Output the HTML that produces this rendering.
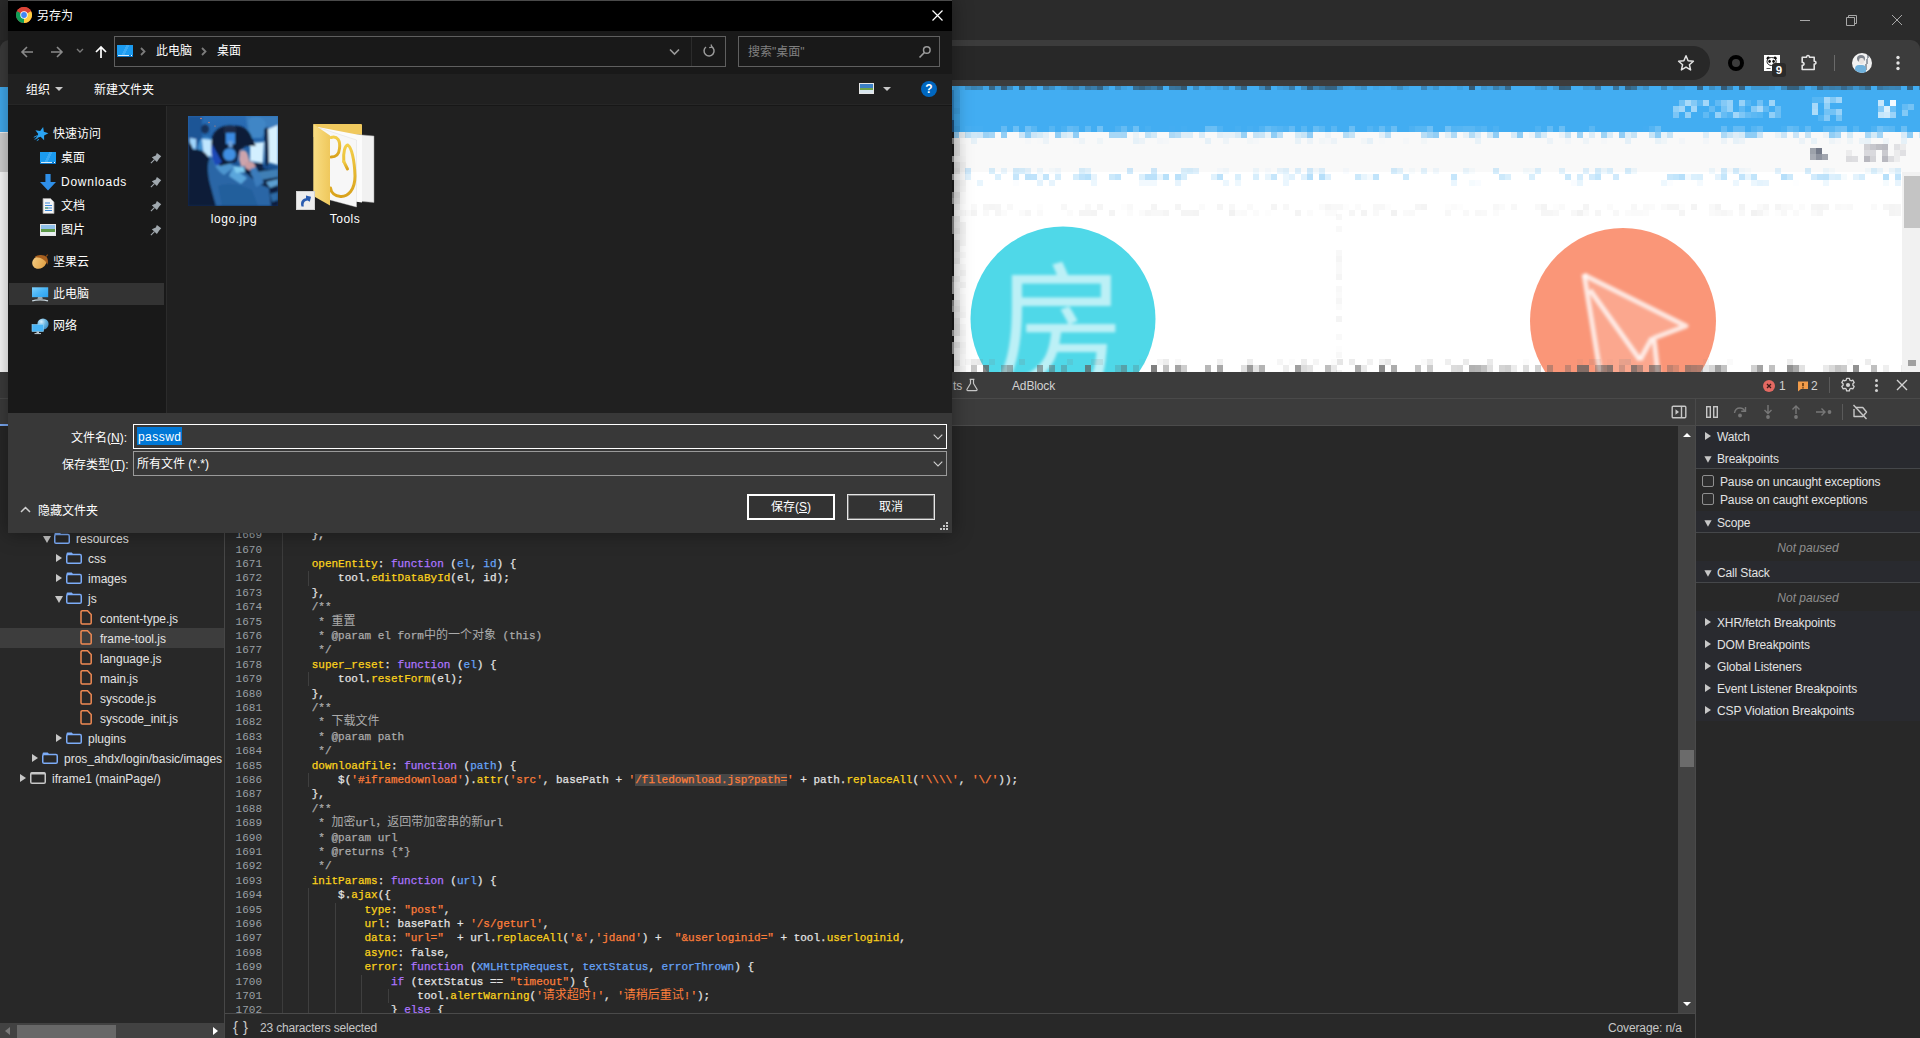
<!DOCTYPE html>
<html lang="zh-CN">
<head>
<meta charset="utf-8">
<title>另存为</title>
<style>
*{box-sizing:border-box;margin:0;padding:0}
html,body{width:1920px;height:1038px;overflow:hidden;background:#282828}
body{position:relative;font-family:"Liberation Sans","Noto Sans CJK SC",sans-serif;font-size:12px;color:#e3e3e3}
.abs,body>div,body>svg{position:absolute}
div,svg{position:absolute}
/* ---------- browser chrome ---------- */
#tabstrip{left:0;top:0;width:1920px;height:40px;background:#2b2b2b}
#btoolbar{left:0;top:40px;width:1920px;height:47px;background:#3c3c3c;border-radius:9px 9px 0 0}
#omni{left:200px;top:46px;width:1510px;height:34px;border-radius:17px;background:#282828}
/* ---------- page ---------- */
#page{left:0;top:86px;width:1920px;height:286px;background:#fff;overflow:hidden}
/* ---------- devtools ---------- */
#dtabs{left:0;top:372px;width:1920px;height:27px;background:#3c3c3c;border-bottom:1px solid #4a4a4a}
#dtool{left:0;top:399px;width:1920px;height:27px;background:#3c3c3c;border-bottom:1px solid #4b4b4b}
#navsel{left:0;top:424px;width:9px;height:2px;background:#7cacf8}
#tree{left:0;top:426px;width:224px;height:596px;background:#282828;overflow:hidden}
#treediv{left:224px;top:426px;width:1px;height:612px;background:#474747}
.tsel{left:0;width:224px;height:20px;background:#3d3d3d}
.tt{height:20px;line-height:20px;white-space:nowrap;color:#e3e3e3;font-size:12px}
.ti{position:absolute}
.arr-d{width:0;height:0;border-left:4.5px solid transparent;border-right:4.5px solid transparent;border-top:7px solid #c7c7c7}
.arr-r{width:0;height:0;border-top:4.5px solid transparent;border-bottom:4.5px solid transparent;border-left:6.5px solid #c7c7c7}
#hscroll{left:0;top:1023px;width:224px;height:15px;background:#424242}
#hthumb{left:17px;top:1025px;width:99px;height:13px;background:#686868}
#gutter{left:225px;top:426px;width:58px;height:587px;background:#282828}
#gutdiv{left:282px;top:426px;width:1px;height:587px;background:#3c3c3c}
#code{left:0;top:0;width:1679px;height:1013px;overflow:hidden;pointer-events:none}
.cl{left:285.3px;height:14.4px;line-height:14.4px;white-space:pre;font-family:"Liberation Mono","Noto Sans CJK SC",monospace;font-size:11px;color:#e3e3e3;-webkit-text-stroke:.25px}
.ln{left:225px;width:37px;text-align:right;height:14.4px;line-height:14.4px;font-family:"Liberation Mono",monospace;font-size:11px;color:#9aa0a6}
.ig{width:1px;background:#3f3f3f}
.ty{color:#fbd21c}.tk{color:#ad75ff}.td{color:#66a3f7}.ts{color:#fe7e3a}.tc{color:#ababab}
.th{color:#fe7e3a;background:#474747}
.cj{font-size:12px;-webkit-text-stroke:0}
#status{left:225px;top:1013px;width:1471px;height:25px;background:#282828;border-top:1px solid #4a4a4a}
#vscroll{left:1678px;top:426px;width:17px;height:587px;background:#424242}
#vthumb{left:1680px;top:750px;width:14px;height:17px;background:#6b6b6b}
#sidediv{left:1695px;top:399px;width:1px;height:639px;background:#4a4a4a}
#side{left:1696px;top:426px;width:224px;height:612px;background:#282828}
#sidetop{left:1696px;top:425px;width:224px;height:1px;background:#4b4b4b}
.sh{left:1696px;width:224px;height:22px;background:#292a2f}
.st{height:20px;line-height:20px;white-space:nowrap;color:#e3e3e3;font-size:12px;letter-spacing:-0.13px}
.arr-d.s{transform:scale(.9)}
.sline{left:1696px;width:224px;height:1px;background:#45474a}
.cb{width:12px;height:12px;border:1px solid #8f8f8f;border-radius:2px;background:#2d2d2d}
.np{left:1696px;width:224px;text-align:center;height:20px;line-height:20px;font-style:italic;color:#8f8f8f;font-size:12px}
/* ---------- dialog ---------- */
#dlg{left:8px;top:0;width:944px;height:533px;background:#202020;box-shadow:0 0 18px 1px rgba(0,0,0,.36);overflow:hidden}
#dlg div,#dlg svg{position:absolute}
#dtitle{left:0;top:1px;width:944px;height:30px;background:#000}
#dtop{left:0;top:0;width:944px;height:1px;background:#4a4a4a}
#dnav{left:0;top:31px;width:944px;height:43px;background:#191919}
#dtb{left:0;top:74px;width:944px;height:31px;background:#202020}
#dtbl{left:0;top:104px;width:944px;height:2px;background:linear-gradient(#262626 50%,#171717 50%)}
#dside{left:0;top:106px;width:158px;height:307px;background:#191919}
#dsidel{left:158px;top:106px;width:1px;height:307px;background:#2b2b2b}
#dbot{left:0;top:413px;width:944px;height:120px;background:#383838}
.dt{margin-top:1px;height:20px;line-height:20px;white-space:nowrap;color:#fff;font-size:12px}
.box{border:1px solid #5f5f5f}
</style>
</head>
<body>
<!-- ================= browser chrome ================= -->
<div id="tabstrip"></div>
<div id="btoolbar"></div>
<div id="omni"></div>
<!-- window controls -->
<svg style="left:1795px;top:10px" width="115" height="20" viewBox="0 0 115 20" fill="none" stroke="#a8a8a8" stroke-width="1">
<path d="M5 10.5h10"/>
<path d="M51.5 7.5h8v8h-8z M53.5 7.5v-2h8v8h-2"/>
<path d="M97 5l10 10M107 5l-10 10"/>
</svg>
<!-- star -->
<svg style="left:1677px;top:54px" width="18" height="18" viewBox="0 0 18 18"><path d="M9 1.8l2.1 5 5.3.4-4 3.5 1.2 5.2L9 13.1l-4.6 2.8 1.2-5.2-4-3.5 5.3-.4z" fill="none" stroke="#e3e3e3" stroke-width="1.5" stroke-linejoin="round"/></svg>
<!-- black ring ext -->
<div style="left:1728px;top:55px;width:16px;height:16px;border-radius:50%;border:4.5px solid #000"></div>
<!-- qr ext -->
<div style="left:1764px;top:55px;width:16px;height:16px;background:#fff"></div>
<svg style="left:1764px;top:55px" width="16" height="16" viewBox="0 0 16 16"><circle cx="4.300" cy="3.300" r="1.700" fill="#111"/><circle cx="11" cy="3.300" r="1.700" fill="#111"/><ellipse cx="7.600" cy="6.500" rx="4.600" ry="4" fill="#fff" stroke="#111" stroke-width=".9"/><ellipse cx="5.600" cy="6.300" rx="1.300" ry="1.600" fill="#111"/><ellipse cx="9.600" cy="6.300" rx="1.300" ry="1.600" fill="#111"/><path d="M2.500 13.500h4" stroke="#555" stroke-width="1"/></svg>
<div style="left:1772px;top:63px;width:14px;height:14px;border-radius:3px;background:#2b2b2b;color:#fff;font-weight:bold;font-size:11.500px;line-height:14px;text-align:center">9</div>
<!-- puzzle -->
<svg style="left:1799px;top:53px" width="20" height="20" viewBox="0 0 20 20"><path d="M3.200 4.300h4.300c-.3-2.400 3.300-2.400 3 0h4.700v3.900c2.300-.3 2.300 3.200 0 2.900v5.400H3.200v-4.100c2.400.3 2.400-3.300 0-3z" fill="none" stroke="#e3e3e3" stroke-width="1.600" stroke-linejoin="round"/></svg>
<div style="left:1834px;top:55px;width:1px;height:16px;background:#6a6a6a"></div>
<!-- avatar -->
<div style="left:1852px;top:53px;width:20px;height:20px;border-radius:50%;background:linear-gradient(100deg,#f2f2f2 0 66%,#9aa0a8 66% 74%,#f0f0f0 74%);overflow:hidden">
 <div style="left:5px;top:2px;width:8px;height:7px;border-radius:50%;background:#7d838c"></div>
 <div style="left:6.500px;top:5px;width:5px;height:6px;border-radius:40%;background:#e8e4e2"></div>
 <div style="left:3px;top:12px;width:11px;height:9px;border-radius:4px 4px 0 0;background:#6fb1dc"></div>
</div>
<!-- menu dots -->
<svg style="left:1895px;top:54px" width="6" height="18" viewBox="0 0 6 18"><circle cx="3" cy="3.500" r="1.700" fill="#e3e3e3"/><circle cx="3" cy="9" r="1.700" fill="#e3e3e3"/><circle cx="3" cy="14.500" r="1.700" fill="#e3e3e3"/></svg>

<!-- ================= page ================= -->
<div id="page">
<svg style="left:0;top:0" width="1920" height="286" viewBox="0 86 1920 286">
<defs><filter id="bl" x="-10%" y="-10%" width="120%" height="120%"><feGaussianBlur stdDeviation="1.6"/></filter></defs>
<circle cx="1063" cy="319" r="92.5" fill="#4fd8e8"/>
<text x="1060" y="373" text-anchor="middle" font-family="Noto Sans CJK SC,sans-serif" font-size="132" fill="#ffffff" fill-opacity="0.62" filter="url(#bl)">房</text>
<circle cx="1623" cy="321" r="93" fill="#fa9678"/>
<path d="M1584 275L1686 326L1654 338L1658 374L1600 374z" fill="#ffffff" fill-opacity="0.16" filter="url(#bl)"/>
<g fill="none" stroke="#ffffff" stroke-opacity="0.75" stroke-width="5" filter="url(#bl)" stroke-linejoin="round">
<path d="M1584 275L1686 326L1654 338L1658 374"/>
<path d="M1584 274L1600 372"/>
<path d="M1590 290L1640 360"/>
<path d="M1640 360L1652 338"/>
</g>
</svg>
<svg style="left:0;top:0" width="1920" height="286" viewBox="0 0 1920 286" shape-rendering="crispEdges">
<rect x="0" y="0" width="1920" height="46" fill="#42adf2"/>
<rect x="0" y="46" width="1920" height="40" fill="#f9f9f9"/>
<rect x="0" y="47" width="9" height="39" fill="#d4d4d4"/>
<rect x="953" y="0" width="6" height="4" fill="#2f3e4a" fill-opacity="0.11"/>
<rect x="959" y="0" width="6" height="4" fill="#2f3e4a" fill-opacity="0.05"/>
<rect x="965" y="0" width="6" height="4" fill="#2f3e4a" fill-opacity="0.27"/>
<rect x="971" y="0" width="6" height="4" fill="#2f3e4a" fill-opacity="0.38"/>
<rect x="977" y="0" width="6" height="4" fill="#2f3e4a" fill-opacity="0.33"/>
<rect x="983" y="0" width="6" height="4" fill="#2f3e4a" fill-opacity="0.07"/>
<rect x="989" y="0" width="6" height="4" fill="#2f3e4a" fill-opacity="0.62"/>
<rect x="995" y="0" width="6" height="4" fill="#2f3e4a" fill-opacity="0.17"/>
<rect x="1001" y="0" width="6" height="4" fill="#2f3e4a" fill-opacity="0.71"/>
<rect x="1007" y="0" width="6" height="4" fill="#2f3e4a" fill-opacity="0.30"/>
<rect x="1019" y="0" width="6" height="4" fill="#2f3e4a" fill-opacity="0.64"/>
<rect x="1025" y="0" width="6" height="4" fill="#2f3e4a" fill-opacity="0.11"/>
<rect x="1031" y="0" width="6" height="4" fill="#2f3e4a" fill-opacity="0.23"/>
<rect x="1043" y="0" width="6" height="4" fill="#2f3e4a" fill-opacity="0.44"/>
<rect x="1049" y="0" width="6" height="4" fill="#2f3e4a" fill-opacity="0.28"/>
<rect x="1055" y="0" width="6" height="4" fill="#2f3e4a" fill-opacity="0.05"/>
<rect x="1061" y="0" width="6" height="4" fill="#2f3e4a" fill-opacity="0.15"/>
<rect x="1067" y="0" width="6" height="4" fill="#2f3e4a" fill-opacity="0.32"/>
<rect x="1073" y="0" width="6" height="4" fill="#2f3e4a" fill-opacity="0.44"/>
<rect x="1079" y="0" width="6" height="4" fill="#2f3e4a" fill-opacity="0.22"/>
<rect x="1085" y="0" width="6" height="4" fill="#2f3e4a" fill-opacity="0.52"/>
<rect x="1091" y="0" width="6" height="4" fill="#2f3e4a" fill-opacity="0.43"/>
<rect x="1097" y="0" width="6" height="4" fill="#2f3e4a" fill-opacity="0.66"/>
<rect x="1103" y="0" width="6" height="4" fill="#2f3e4a" fill-opacity="0.22"/>
<rect x="1115" y="0" width="6" height="4" fill="#2f3e4a" fill-opacity="0.31"/>
<rect x="1121" y="0" width="6" height="4" fill="#2f3e4a" fill-opacity="0.11"/>
<rect x="1127" y="0" width="6" height="4" fill="#2f3e4a" fill-opacity="0.03"/>
<rect x="1133" y="0" width="6" height="4" fill="#2f3e4a" fill-opacity="0.57"/>
<rect x="1139" y="0" width="6" height="4" fill="#2f3e4a" fill-opacity="0.66"/>
<rect x="1145" y="0" width="6" height="4" fill="#2f3e4a" fill-opacity="0.52"/>
<rect x="1151" y="0" width="6" height="4" fill="#2f3e4a" fill-opacity="0.43"/>
<rect x="1157" y="0" width="6" height="4" fill="#2f3e4a" fill-opacity="0.63"/>
<rect x="1169" y="0" width="6" height="4" fill="#2f3e4a" fill-opacity="0.50"/>
<rect x="1175" y="0" width="6" height="4" fill="#2f3e4a" fill-opacity="0.53"/>
<rect x="1181" y="0" width="6" height="4" fill="#2f3e4a" fill-opacity="0.74"/>
<rect x="1193" y="0" width="6" height="4" fill="#2f3e4a" fill-opacity="0.29"/>
<rect x="1199" y="0" width="6" height="4" fill="#2f3e4a" fill-opacity="0.02"/>
<rect x="1205" y="0" width="6" height="4" fill="#2f3e4a" fill-opacity="0.13"/>
<rect x="1211" y="0" width="6" height="4" fill="#2f3e4a" fill-opacity="0.04"/>
<rect x="1217" y="0" width="6" height="4" fill="#2f3e4a" fill-opacity="0.10"/>
<rect x="1223" y="0" width="6" height="4" fill="#2f3e4a" fill-opacity="0.29"/>
<rect x="1235" y="0" width="6" height="4" fill="#2f3e4a" fill-opacity="0.34"/>
<rect x="1241" y="0" width="6" height="4" fill="#2f3e4a" fill-opacity="0.66"/>
<rect x="1259" y="0" width="6" height="4" fill="#2f3e4a" fill-opacity="0.31"/>
<rect x="1265" y="0" width="6" height="4" fill="#2f3e4a" fill-opacity="0.66"/>
<rect x="1277" y="0" width="6" height="4" fill="#2f3e4a" fill-opacity="0.13"/>
<rect x="1283" y="0" width="6" height="4" fill="#2f3e4a" fill-opacity="0.18"/>
<rect x="1289" y="0" width="6" height="4" fill="#2f3e4a" fill-opacity="0.44"/>
<rect x="1295" y="0" width="6" height="4" fill="#2f3e4a" fill-opacity="0.00"/>
<rect x="1301" y="0" width="6" height="4" fill="#2f3e4a" fill-opacity="0.28"/>
<rect x="1307" y="0" width="6" height="4" fill="#2f3e4a" fill-opacity="0.71"/>
<rect x="1313" y="0" width="6" height="4" fill="#2f3e4a" fill-opacity="0.39"/>
<rect x="1319" y="0" width="6" height="4" fill="#2f3e4a" fill-opacity="0.51"/>
<rect x="1325" y="0" width="6" height="4" fill="#2f3e4a" fill-opacity="0.67"/>
<rect x="1331" y="0" width="6" height="4" fill="#2f3e4a" fill-opacity="0.66"/>
<rect x="1337" y="0" width="6" height="4" fill="#2f3e4a" fill-opacity="0.29"/>
<rect x="1343" y="0" width="6" height="4" fill="#2f3e4a" fill-opacity="0.08"/>
<rect x="1349" y="0" width="6" height="4" fill="#2f3e4a" fill-opacity="0.05"/>
<rect x="1355" y="0" width="6" height="4" fill="#2f3e4a" fill-opacity="0.16"/>
<rect x="1361" y="0" width="6" height="4" fill="#2f3e4a" fill-opacity="0.26"/>
<rect x="1367" y="0" width="6" height="4" fill="#2f3e4a" fill-opacity="0.00"/>
<rect x="1373" y="0" width="6" height="4" fill="#2f3e4a" fill-opacity="0.08"/>
<rect x="1379" y="0" width="6" height="4" fill="#2f3e4a" fill-opacity="0.02"/>
<rect x="1391" y="0" width="6" height="4" fill="#2f3e4a" fill-opacity="0.11"/>
<rect x="1397" y="0" width="6" height="4" fill="#2f3e4a" fill-opacity="0.26"/>
<rect x="1403" y="0" width="6" height="4" fill="#2f3e4a" fill-opacity="0.09"/>
<rect x="1421" y="0" width="6" height="4" fill="#2f3e4a" fill-opacity="0.36"/>
<rect x="1427" y="0" width="6" height="4" fill="#2f3e4a" fill-opacity="0.08"/>
<rect x="1433" y="0" width="6" height="4" fill="#2f3e4a" fill-opacity="0.20"/>
<rect x="1445" y="0" width="6" height="4" fill="#2f3e4a" fill-opacity="0.02"/>
<rect x="1457" y="0" width="6" height="4" fill="#2f3e4a" fill-opacity="0.11"/>
<rect x="1463" y="0" width="6" height="4" fill="#2f3e4a" fill-opacity="0.02"/>
<rect x="1469" y="0" width="6" height="4" fill="#2f3e4a" fill-opacity="0.73"/>
<rect x="1481" y="0" width="6" height="4" fill="#2f3e4a" fill-opacity="0.20"/>
<rect x="1487" y="0" width="6" height="4" fill="#2f3e4a" fill-opacity="0.13"/>
<rect x="1493" y="0" width="6" height="4" fill="#2f3e4a" fill-opacity="0.40"/>
<rect x="1499" y="0" width="6" height="4" fill="#2f3e4a" fill-opacity="0.25"/>
<rect x="1505" y="0" width="6" height="4" fill="#2f3e4a" fill-opacity="0.61"/>
<rect x="1535" y="0" width="6" height="4" fill="#2f3e4a" fill-opacity="0.17"/>
<rect x="1541" y="0" width="6" height="4" fill="#2f3e4a" fill-opacity="0.27"/>
<rect x="1547" y="0" width="6" height="4" fill="#2f3e4a" fill-opacity="0.02"/>
<rect x="1553" y="0" width="6" height="4" fill="#2f3e4a" fill-opacity="0.19"/>
<rect x="1559" y="0" width="6" height="4" fill="#2f3e4a" fill-opacity="0.72"/>
<rect x="1565" y="0" width="6" height="4" fill="#2f3e4a" fill-opacity="0.70"/>
<rect x="1583" y="0" width="6" height="4" fill="#2f3e4a" fill-opacity="0.17"/>
<rect x="1589" y="0" width="6" height="4" fill="#2f3e4a" fill-opacity="0.15"/>
<rect x="1595" y="0" width="6" height="4" fill="#2f3e4a" fill-opacity="0.47"/>
<rect x="1613" y="0" width="6" height="4" fill="#2f3e4a" fill-opacity="0.49"/>
<rect x="1619" y="0" width="6" height="4" fill="#2f3e4a" fill-opacity="0.06"/>
<rect x="1625" y="0" width="6" height="4" fill="#2f3e4a" fill-opacity="0.68"/>
<rect x="1631" y="0" width="6" height="4" fill="#2f3e4a" fill-opacity="0.56"/>
<rect x="1637" y="0" width="6" height="4" fill="#2f3e4a" fill-opacity="0.13"/>
<rect x="1643" y="0" width="6" height="4" fill="#2f3e4a" fill-opacity="0.25"/>
<rect x="1661" y="0" width="6" height="4" fill="#2f3e4a" fill-opacity="0.30"/>
<rect x="1673" y="0" width="6" height="4" fill="#2f3e4a" fill-opacity="0.13"/>
<rect x="1679" y="0" width="6" height="4" fill="#2f3e4a" fill-opacity="0.11"/>
<rect x="1697" y="0" width="6" height="4" fill="#2f3e4a" fill-opacity="0.62"/>
<rect x="1709" y="0" width="6" height="4" fill="#2f3e4a" fill-opacity="0.26"/>
<rect x="1715" y="0" width="6" height="4" fill="#2f3e4a" fill-opacity="0.10"/>
<rect x="1721" y="0" width="6" height="4" fill="#2f3e4a" fill-opacity="0.73"/>
<rect x="1727" y="0" width="6" height="4" fill="#2f3e4a" fill-opacity="0.39"/>
<rect x="1739" y="0" width="6" height="4" fill="#2f3e4a" fill-opacity="0.65"/>
<rect x="1751" y="0" width="6" height="4" fill="#2f3e4a" fill-opacity="0.19"/>
<rect x="1757" y="0" width="6" height="4" fill="#2f3e4a" fill-opacity="0.18"/>
<rect x="1763" y="0" width="6" height="4" fill="#2f3e4a" fill-opacity="0.19"/>
<rect x="1769" y="0" width="6" height="4" fill="#2f3e4a" fill-opacity="0.10"/>
<rect x="1781" y="0" width="6" height="4" fill="#2f3e4a" fill-opacity="0.34"/>
<rect x="1787" y="0" width="6" height="4" fill="#2f3e4a" fill-opacity="0.68"/>
<rect x="1793" y="0" width="6" height="4" fill="#2f3e4a" fill-opacity="0.69"/>
<rect x="1799" y="0" width="6" height="4" fill="#2f3e4a" fill-opacity="0.40"/>
<rect x="1805" y="0" width="6" height="4" fill="#2f3e4a" fill-opacity="0.01"/>
<rect x="1811" y="0" width="6" height="4" fill="#2f3e4a" fill-opacity="0.14"/>
<rect x="1817" y="0" width="6" height="4" fill="#2f3e4a" fill-opacity="0.60"/>
<rect x="1823" y="0" width="6" height="4" fill="#2f3e4a" fill-opacity="0.36"/>
<rect x="1829" y="0" width="6" height="4" fill="#2f3e4a" fill-opacity="0.42"/>
<rect x="1835" y="0" width="6" height="4" fill="#2f3e4a" fill-opacity="0.39"/>
<rect x="1841" y="0" width="6" height="4" fill="#2f3e4a" fill-opacity="0.59"/>
<rect x="1847" y="0" width="6" height="4" fill="#2f3e4a" fill-opacity="0.42"/>
<rect x="1853" y="0" width="6" height="4" fill="#2f3e4a" fill-opacity="0.21"/>
<rect x="1859" y="0" width="6" height="4" fill="#2f3e4a" fill-opacity="0.38"/>
<rect x="1865" y="0" width="6" height="4" fill="#2f3e4a" fill-opacity="0.57"/>
<rect x="1877" y="0" width="6" height="4" fill="#2f3e4a" fill-opacity="0.46"/>
<rect x="1883" y="0" width="6" height="4" fill="#2f3e4a" fill-opacity="0.38"/>
<rect x="1889" y="0" width="6" height="4" fill="#2f3e4a" fill-opacity="0.34"/>
<rect x="1895" y="0" width="6" height="4" fill="#2f3e4a" fill-opacity="0.36"/>
<rect x="1907" y="0" width="6" height="4" fill="#2f3e4a" fill-opacity="0.66"/>
<rect x="1919" y="0" width="6" height="4" fill="#2f3e4a" fill-opacity="0.42"/>
<rect x="965" y="40" width="6" height="6" fill="#ffffff" fill-opacity="0.03"/>
<rect x="971" y="40" width="6" height="6" fill="#ffffff" fill-opacity="0.02"/>
<rect x="977" y="40" width="6" height="6" fill="#ffffff" fill-opacity="0.02"/>
<rect x="1001" y="40" width="6" height="6" fill="#ffffff" fill-opacity="0.18"/>
<rect x="1013" y="40" width="6" height="6" fill="#ffffff" fill-opacity="0.22"/>
<rect x="1025" y="40" width="6" height="6" fill="#ffffff" fill-opacity="0.24"/>
<rect x="1031" y="40" width="6" height="6" fill="#ffffff" fill-opacity="0.12"/>
<rect x="1049" y="40" width="6" height="6" fill="#ffffff" fill-opacity="0.11"/>
<rect x="1061" y="40" width="6" height="6" fill="#ffffff" fill-opacity="0.05"/>
<rect x="1067" y="40" width="6" height="6" fill="#ffffff" fill-opacity="0.18"/>
<rect x="1073" y="40" width="6" height="6" fill="#ffffff" fill-opacity="0.14"/>
<rect x="1079" y="40" width="6" height="6" fill="#ffffff" fill-opacity="0.00"/>
<rect x="1085" y="40" width="6" height="6" fill="#ffffff" fill-opacity="0.16"/>
<rect x="1097" y="40" width="6" height="6" fill="#ffffff" fill-opacity="0.25"/>
<rect x="1115" y="40" width="6" height="6" fill="#ffffff" fill-opacity="0.07"/>
<rect x="1121" y="40" width="6" height="6" fill="#ffffff" fill-opacity="0.19"/>
<rect x="1127" y="40" width="6" height="6" fill="#ffffff" fill-opacity="0.03"/>
<rect x="1133" y="40" width="6" height="6" fill="#ffffff" fill-opacity="0.23"/>
<rect x="1145" y="40" width="6" height="6" fill="#ffffff" fill-opacity="0.04"/>
<rect x="1169" y="40" width="6" height="6" fill="#ffffff" fill-opacity="0.01"/>
<rect x="1181" y="40" width="6" height="6" fill="#ffffff" fill-opacity="0.02"/>
<rect x="1205" y="40" width="6" height="6" fill="#ffffff" fill-opacity="0.21"/>
<rect x="1211" y="40" width="6" height="6" fill="#ffffff" fill-opacity="0.22"/>
<rect x="1217" y="40" width="6" height="6" fill="#ffffff" fill-opacity="0.08"/>
<rect x="1235" y="40" width="6" height="6" fill="#ffffff" fill-opacity="0.03"/>
<rect x="1247" y="40" width="6" height="6" fill="#ffffff" fill-opacity="0.03"/>
<rect x="1253" y="40" width="6" height="6" fill="#ffffff" fill-opacity="0.01"/>
<rect x="1259" y="40" width="6" height="6" fill="#ffffff" fill-opacity="0.08"/>
<rect x="1265" y="40" width="6" height="6" fill="#ffffff" fill-opacity="0.19"/>
<rect x="1271" y="40" width="6" height="6" fill="#ffffff" fill-opacity="0.13"/>
<rect x="1277" y="40" width="6" height="6" fill="#ffffff" fill-opacity="0.09"/>
<rect x="1283" y="40" width="6" height="6" fill="#ffffff" fill-opacity="0.06"/>
<rect x="1289" y="40" width="6" height="6" fill="#ffffff" fill-opacity="0.18"/>
<rect x="1301" y="40" width="6" height="6" fill="#ffffff" fill-opacity="0.12"/>
<rect x="1313" y="40" width="6" height="6" fill="#ffffff" fill-opacity="0.20"/>
<rect x="1319" y="40" width="6" height="6" fill="#ffffff" fill-opacity="0.12"/>
<rect x="1331" y="40" width="6" height="6" fill="#ffffff" fill-opacity="0.13"/>
<rect x="1349" y="40" width="6" height="6" fill="#ffffff" fill-opacity="0.21"/>
<rect x="1367" y="40" width="6" height="6" fill="#ffffff" fill-opacity="0.09"/>
<rect x="1373" y="40" width="6" height="6" fill="#ffffff" fill-opacity="0.03"/>
<rect x="1379" y="40" width="6" height="6" fill="#ffffff" fill-opacity="0.19"/>
<rect x="1385" y="40" width="6" height="6" fill="#ffffff" fill-opacity="0.04"/>
<rect x="1391" y="40" width="6" height="6" fill="#ffffff" fill-opacity="0.21"/>
<rect x="1409" y="40" width="6" height="6" fill="#ffffff" fill-opacity="0.06"/>
<rect x="1415" y="40" width="6" height="6" fill="#ffffff" fill-opacity="0.11"/>
<rect x="1421" y="40" width="6" height="6" fill="#ffffff" fill-opacity="0.11"/>
<rect x="1427" y="40" width="6" height="6" fill="#ffffff" fill-opacity="0.24"/>
<rect x="1445" y="40" width="6" height="6" fill="#ffffff" fill-opacity="0.24"/>
<rect x="1451" y="40" width="6" height="6" fill="#ffffff" fill-opacity="0.09"/>
<rect x="1457" y="40" width="6" height="6" fill="#ffffff" fill-opacity="0.10"/>
<rect x="1463" y="40" width="6" height="6" fill="#ffffff" fill-opacity="0.13"/>
<rect x="1469" y="40" width="6" height="6" fill="#ffffff" fill-opacity="0.13"/>
<rect x="1475" y="40" width="6" height="6" fill="#ffffff" fill-opacity="0.07"/>
<rect x="1481" y="40" width="6" height="6" fill="#ffffff" fill-opacity="0.10"/>
<rect x="1487" y="40" width="6" height="6" fill="#ffffff" fill-opacity="0.01"/>
<rect x="1493" y="40" width="6" height="6" fill="#ffffff" fill-opacity="0.06"/>
<rect x="1535" y="40" width="6" height="6" fill="#ffffff" fill-opacity="0.08"/>
<rect x="1547" y="40" width="6" height="6" fill="#ffffff" fill-opacity="0.18"/>
<rect x="1559" y="40" width="6" height="6" fill="#ffffff" fill-opacity="0.21"/>
<rect x="1589" y="40" width="6" height="6" fill="#ffffff" fill-opacity="0.13"/>
<rect x="1643" y="40" width="6" height="6" fill="#ffffff" fill-opacity="0.01"/>
<rect x="1649" y="40" width="6" height="6" fill="#ffffff" fill-opacity="0.09"/>
<rect x="1655" y="40" width="6" height="6" fill="#ffffff" fill-opacity="0.21"/>
<rect x="1685" y="40" width="6" height="6" fill="#ffffff" fill-opacity="0.00"/>
<rect x="1721" y="40" width="6" height="6" fill="#ffffff" fill-opacity="0.18"/>
<rect x="1727" y="40" width="6" height="6" fill="#ffffff" fill-opacity="0.02"/>
<rect x="1733" y="40" width="6" height="6" fill="#ffffff" fill-opacity="0.18"/>
<rect x="1739" y="40" width="6" height="6" fill="#ffffff" fill-opacity="0.18"/>
<rect x="1751" y="40" width="6" height="6" fill="#ffffff" fill-opacity="0.10"/>
<rect x="1757" y="40" width="6" height="6" fill="#ffffff" fill-opacity="0.17"/>
<rect x="1781" y="40" width="6" height="6" fill="#ffffff" fill-opacity="0.04"/>
<rect x="1787" y="40" width="6" height="6" fill="#ffffff" fill-opacity="0.19"/>
<rect x="1793" y="40" width="6" height="6" fill="#ffffff" fill-opacity="0.14"/>
<rect x="1799" y="40" width="6" height="6" fill="#ffffff" fill-opacity="0.02"/>
<rect x="1805" y="40" width="6" height="6" fill="#ffffff" fill-opacity="0.17"/>
<rect x="1823" y="40" width="6" height="6" fill="#ffffff" fill-opacity="0.13"/>
<rect x="1829" y="40" width="6" height="6" fill="#ffffff" fill-opacity="0.12"/>
<rect x="1835" y="40" width="6" height="6" fill="#ffffff" fill-opacity="0.22"/>
<rect x="1841" y="40" width="6" height="6" fill="#ffffff" fill-opacity="0.24"/>
<rect x="1853" y="40" width="6" height="6" fill="#ffffff" fill-opacity="0.11"/>
<rect x="1871" y="40" width="6" height="6" fill="#ffffff" fill-opacity="0.07"/>
<rect x="1877" y="40" width="6" height="6" fill="#ffffff" fill-opacity="0.24"/>
<rect x="1883" y="40" width="6" height="6" fill="#ffffff" fill-opacity="0.15"/>
<rect x="1889" y="40" width="6" height="6" fill="#ffffff" fill-opacity="0.13"/>
<rect x="1901" y="40" width="6" height="6" fill="#ffffff" fill-opacity="0.21"/>
<rect x="953" y="46" width="6" height="6" fill="#42adf2" fill-opacity="0.54"/>
<rect x="959" y="46" width="6" height="6" fill="#42adf2" fill-opacity="0.06"/>
<rect x="965" y="46" width="6" height="6" fill="#42adf2" fill-opacity="0.32"/>
<rect x="971" y="46" width="6" height="6" fill="#42adf2" fill-opacity="0.22"/>
<rect x="977" y="46" width="6" height="6" fill="#42adf2" fill-opacity="0.24"/>
<rect x="983" y="46" width="6" height="6" fill="#42adf2" fill-opacity="0.51"/>
<rect x="989" y="46" width="6" height="6" fill="#42adf2" fill-opacity="0.46"/>
<rect x="1001" y="46" width="6" height="6" fill="#42adf2" fill-opacity="0.56"/>
<rect x="1019" y="46" width="6" height="6" fill="#42adf2" fill-opacity="0.25"/>
<rect x="1025" y="46" width="6" height="6" fill="#42adf2" fill-opacity="0.60"/>
<rect x="1031" y="46" width="6" height="6" fill="#42adf2" fill-opacity="0.25"/>
<rect x="1037" y="46" width="6" height="6" fill="#42adf2" fill-opacity="0.20"/>
<rect x="1043" y="46" width="6" height="6" fill="#42adf2" fill-opacity="0.11"/>
<rect x="1055" y="46" width="6" height="6" fill="#42adf2" fill-opacity="0.56"/>
<rect x="1061" y="46" width="6" height="6" fill="#42adf2" fill-opacity="0.20"/>
<rect x="1067" y="46" width="6" height="6" fill="#42adf2" fill-opacity="0.15"/>
<rect x="1073" y="46" width="6" height="6" fill="#42adf2" fill-opacity="0.58"/>
<rect x="1109" y="46" width="6" height="6" fill="#42adf2" fill-opacity="0.45"/>
<rect x="1115" y="46" width="6" height="6" fill="#42adf2" fill-opacity="0.45"/>
<rect x="1121" y="46" width="6" height="6" fill="#42adf2" fill-opacity="0.46"/>
<rect x="1133" y="46" width="6" height="6" fill="#42adf2" fill-opacity="0.08"/>
<rect x="1145" y="46" width="6" height="6" fill="#42adf2" fill-opacity="0.31"/>
<rect x="1151" y="46" width="6" height="6" fill="#42adf2" fill-opacity="0.21"/>
<rect x="1169" y="46" width="6" height="6" fill="#42adf2" fill-opacity="0.41"/>
<rect x="1175" y="46" width="6" height="6" fill="#42adf2" fill-opacity="0.36"/>
<rect x="1181" y="46" width="6" height="6" fill="#42adf2" fill-opacity="0.14"/>
<rect x="1187" y="46" width="6" height="6" fill="#42adf2" fill-opacity="0.16"/>
<rect x="1199" y="46" width="6" height="6" fill="#42adf2" fill-opacity="0.17"/>
<rect x="1217" y="46" width="6" height="6" fill="#42adf2" fill-opacity="0.13"/>
<rect x="1223" y="46" width="6" height="6" fill="#42adf2" fill-opacity="0.10"/>
<rect x="1229" y="46" width="6" height="6" fill="#42adf2" fill-opacity="0.10"/>
<rect x="1235" y="46" width="6" height="6" fill="#42adf2" fill-opacity="0.19"/>
<rect x="1241" y="46" width="6" height="6" fill="#42adf2" fill-opacity="0.54"/>
<rect x="1253" y="46" width="6" height="6" fill="#42adf2" fill-opacity="0.28"/>
<rect x="1259" y="46" width="6" height="6" fill="#42adf2" fill-opacity="0.26"/>
<rect x="1265" y="46" width="6" height="6" fill="#42adf2" fill-opacity="0.08"/>
<rect x="1271" y="46" width="6" height="6" fill="#42adf2" fill-opacity="0.58"/>
<rect x="1277" y="46" width="6" height="6" fill="#42adf2" fill-opacity="0.33"/>
<rect x="1295" y="46" width="6" height="6" fill="#42adf2" fill-opacity="0.20"/>
<rect x="1301" y="46" width="6" height="6" fill="#42adf2" fill-opacity="0.27"/>
<rect x="1307" y="46" width="6" height="6" fill="#42adf2" fill-opacity="0.57"/>
<rect x="1325" y="46" width="6" height="6" fill="#42adf2" fill-opacity="0.07"/>
<rect x="1343" y="46" width="6" height="6" fill="#42adf2" fill-opacity="0.37"/>
<rect x="1349" y="46" width="6" height="6" fill="#42adf2" fill-opacity="0.27"/>
<rect x="1379" y="46" width="6" height="6" fill="#42adf2" fill-opacity="0.11"/>
<rect x="1385" y="46" width="6" height="6" fill="#42adf2" fill-opacity="0.34"/>
<rect x="1421" y="46" width="6" height="6" fill="#42adf2" fill-opacity="0.35"/>
<rect x="1427" y="46" width="6" height="6" fill="#42adf2" fill-opacity="0.48"/>
<rect x="1433" y="46" width="6" height="6" fill="#42adf2" fill-opacity="0.56"/>
<rect x="1445" y="46" width="6" height="6" fill="#42adf2" fill-opacity="0.12"/>
<rect x="1451" y="46" width="6" height="6" fill="#42adf2" fill-opacity="0.40"/>
<rect x="1463" y="46" width="6" height="6" fill="#42adf2" fill-opacity="0.09"/>
<rect x="1469" y="46" width="6" height="6" fill="#42adf2" fill-opacity="0.37"/>
<rect x="1475" y="46" width="6" height="6" fill="#42adf2" fill-opacity="0.17"/>
<rect x="1487" y="46" width="6" height="6" fill="#42adf2" fill-opacity="0.22"/>
<rect x="1493" y="46" width="6" height="6" fill="#42adf2" fill-opacity="0.58"/>
<rect x="1511" y="46" width="6" height="6" fill="#42adf2" fill-opacity="0.18"/>
<rect x="1517" y="46" width="6" height="6" fill="#42adf2" fill-opacity="0.58"/>
<rect x="1529" y="46" width="6" height="6" fill="#42adf2" fill-opacity="0.06"/>
<rect x="1535" y="46" width="6" height="6" fill="#42adf2" fill-opacity="0.42"/>
<rect x="1541" y="46" width="6" height="6" fill="#42adf2" fill-opacity="0.19"/>
<rect x="1559" y="46" width="6" height="6" fill="#42adf2" fill-opacity="0.07"/>
<rect x="1565" y="46" width="6" height="6" fill="#42adf2" fill-opacity="0.28"/>
<rect x="1577" y="46" width="6" height="6" fill="#42adf2" fill-opacity="0.49"/>
<rect x="1589" y="46" width="6" height="6" fill="#42adf2" fill-opacity="0.16"/>
<rect x="1601" y="46" width="6" height="6" fill="#42adf2" fill-opacity="0.50"/>
<rect x="1607" y="46" width="6" height="6" fill="#42adf2" fill-opacity="0.17"/>
<rect x="1619" y="46" width="6" height="6" fill="#42adf2" fill-opacity="0.57"/>
<rect x="1625" y="46" width="6" height="6" fill="#42adf2" fill-opacity="0.15"/>
<rect x="1631" y="46" width="6" height="6" fill="#42adf2" fill-opacity="0.28"/>
<rect x="1649" y="46" width="6" height="6" fill="#42adf2" fill-opacity="0.27"/>
<rect x="1655" y="46" width="6" height="6" fill="#42adf2" fill-opacity="0.59"/>
<rect x="1661" y="46" width="6" height="6" fill="#42adf2" fill-opacity="0.08"/>
<rect x="1667" y="46" width="6" height="6" fill="#42adf2" fill-opacity="0.27"/>
<rect x="1703" y="46" width="6" height="6" fill="#42adf2" fill-opacity="0.15"/>
<rect x="1721" y="46" width="6" height="6" fill="#42adf2" fill-opacity="0.42"/>
<rect x="1727" y="46" width="6" height="6" fill="#42adf2" fill-opacity="0.26"/>
<rect x="1733" y="46" width="6" height="6" fill="#42adf2" fill-opacity="0.14"/>
<rect x="1739" y="46" width="6" height="6" fill="#42adf2" fill-opacity="0.20"/>
<rect x="1745" y="46" width="6" height="6" fill="#42adf2" fill-opacity="0.58"/>
<rect x="1751" y="46" width="6" height="6" fill="#42adf2" fill-opacity="0.58"/>
<rect x="1757" y="46" width="6" height="6" fill="#42adf2" fill-opacity="0.25"/>
<rect x="1775" y="46" width="6" height="6" fill="#42adf2" fill-opacity="0.08"/>
<rect x="1781" y="46" width="6" height="6" fill="#42adf2" fill-opacity="0.25"/>
<rect x="1793" y="46" width="6" height="6" fill="#42adf2" fill-opacity="0.25"/>
<rect x="1805" y="46" width="6" height="6" fill="#42adf2" fill-opacity="0.28"/>
<rect x="1823" y="46" width="6" height="6" fill="#42adf2" fill-opacity="0.07"/>
<rect x="1829" y="46" width="6" height="6" fill="#42adf2" fill-opacity="0.56"/>
<rect x="1835" y="46" width="6" height="6" fill="#42adf2" fill-opacity="0.46"/>
<rect x="1847" y="46" width="6" height="6" fill="#42adf2" fill-opacity="0.20"/>
<rect x="1865" y="46" width="6" height="6" fill="#42adf2" fill-opacity="0.44"/>
<rect x="1871" y="46" width="6" height="6" fill="#42adf2" fill-opacity="0.20"/>
<rect x="1877" y="46" width="6" height="6" fill="#42adf2" fill-opacity="0.47"/>
<rect x="1901" y="46" width="6" height="6" fill="#42adf2" fill-opacity="0.18"/>
<rect x="1907" y="46" width="6" height="6" fill="#42adf2" fill-opacity="0.58"/>
<rect x="1919" y="46" width="6" height="6" fill="#42adf2" fill-opacity="0.19"/>
<rect x="971" y="52" width="6" height="6" fill="#42adf2" fill-opacity="0.10"/>
<rect x="1025" y="52" width="6" height="6" fill="#42adf2" fill-opacity="0.02"/>
<rect x="1037" y="52" width="6" height="6" fill="#42adf2" fill-opacity="0.01"/>
<rect x="1043" y="52" width="6" height="6" fill="#42adf2" fill-opacity="0.07"/>
<rect x="1073" y="52" width="6" height="6" fill="#42adf2" fill-opacity="0.01"/>
<rect x="1079" y="52" width="6" height="6" fill="#42adf2" fill-opacity="0.06"/>
<rect x="1097" y="52" width="6" height="6" fill="#42adf2" fill-opacity="0.05"/>
<rect x="1133" y="52" width="6" height="6" fill="#42adf2" fill-opacity="0.10"/>
<rect x="1139" y="52" width="6" height="6" fill="#42adf2" fill-opacity="0.07"/>
<rect x="1157" y="52" width="6" height="6" fill="#42adf2" fill-opacity="0.03"/>
<rect x="1163" y="52" width="6" height="6" fill="#42adf2" fill-opacity="0.02"/>
<rect x="1205" y="52" width="6" height="6" fill="#42adf2" fill-opacity="0.10"/>
<rect x="1223" y="52" width="6" height="6" fill="#42adf2" fill-opacity="0.06"/>
<rect x="1247" y="52" width="6" height="6" fill="#42adf2" fill-opacity="0.04"/>
<rect x="1253" y="52" width="6" height="6" fill="#42adf2" fill-opacity="0.02"/>
<rect x="1295" y="52" width="6" height="6" fill="#42adf2" fill-opacity="0.09"/>
<rect x="1307" y="52" width="6" height="6" fill="#42adf2" fill-opacity="0.07"/>
<rect x="1319" y="52" width="6" height="6" fill="#42adf2" fill-opacity="0.04"/>
<rect x="1325" y="52" width="6" height="6" fill="#42adf2" fill-opacity="0.02"/>
<rect x="1331" y="52" width="6" height="6" fill="#42adf2" fill-opacity="0.07"/>
<rect x="1343" y="52" width="6" height="6" fill="#42adf2" fill-opacity="0.00"/>
<rect x="1361" y="52" width="6" height="6" fill="#42adf2" fill-opacity="0.04"/>
<rect x="1367" y="52" width="6" height="6" fill="#42adf2" fill-opacity="0.10"/>
<rect x="1379" y="52" width="6" height="6" fill="#42adf2" fill-opacity="0.01"/>
<rect x="1403" y="52" width="6" height="6" fill="#42adf2" fill-opacity="0.02"/>
<rect x="1421" y="52" width="6" height="6" fill="#42adf2" fill-opacity="0.04"/>
<rect x="1475" y="52" width="6" height="6" fill="#42adf2" fill-opacity="0.09"/>
<rect x="1481" y="52" width="6" height="6" fill="#42adf2" fill-opacity="0.00"/>
<rect x="1523" y="52" width="6" height="6" fill="#42adf2" fill-opacity="0.00"/>
<rect x="1547" y="52" width="6" height="6" fill="#42adf2" fill-opacity="0.07"/>
<rect x="1565" y="52" width="6" height="6" fill="#42adf2" fill-opacity="0.03"/>
<rect x="1583" y="52" width="6" height="6" fill="#42adf2" fill-opacity="0.06"/>
<rect x="1601" y="52" width="6" height="6" fill="#42adf2" fill-opacity="0.02"/>
<rect x="1625" y="52" width="6" height="6" fill="#42adf2" fill-opacity="0.11"/>
<rect x="1655" y="52" width="6" height="6" fill="#42adf2" fill-opacity="0.09"/>
<rect x="1661" y="52" width="6" height="6" fill="#42adf2" fill-opacity="0.05"/>
<rect x="1679" y="52" width="6" height="6" fill="#42adf2" fill-opacity="0.03"/>
<rect x="1703" y="52" width="6" height="6" fill="#42adf2" fill-opacity="0.03"/>
<rect x="1721" y="52" width="6" height="6" fill="#42adf2" fill-opacity="0.07"/>
<rect x="1733" y="52" width="6" height="6" fill="#42adf2" fill-opacity="0.10"/>
<rect x="1739" y="52" width="6" height="6" fill="#42adf2" fill-opacity="0.07"/>
<rect x="1799" y="52" width="6" height="6" fill="#42adf2" fill-opacity="0.07"/>
<rect x="1811" y="52" width="6" height="6" fill="#42adf2" fill-opacity="0.09"/>
<rect x="1829" y="52" width="6" height="6" fill="#42adf2" fill-opacity="0.06"/>
<rect x="1835" y="52" width="6" height="6" fill="#42adf2" fill-opacity="0.02"/>
<rect x="1847" y="52" width="6" height="6" fill="#42adf2" fill-opacity="0.05"/>
<rect x="1859" y="52" width="6" height="6" fill="#42adf2" fill-opacity="0.08"/>
<rect x="1865" y="52" width="6" height="6" fill="#42adf2" fill-opacity="0.09"/>
<rect x="1883" y="52" width="6" height="6" fill="#42adf2" fill-opacity="0.06"/>
<rect x="1901" y="52" width="6" height="6" fill="#42adf2" fill-opacity="0.10"/>
<rect x="965" y="82" width="6" height="6" fill="#42adf2" fill-opacity="0.25"/>
<rect x="989" y="82" width="6" height="6" fill="#42adf2" fill-opacity="0.20"/>
<rect x="1001" y="82" width="6" height="6" fill="#42adf2" fill-opacity="0.11"/>
<rect x="1013" y="82" width="6" height="6" fill="#42adf2" fill-opacity="0.23"/>
<rect x="1019" y="82" width="6" height="6" fill="#42adf2" fill-opacity="0.21"/>
<rect x="1025" y="82" width="6" height="6" fill="#42adf2" fill-opacity="0.14"/>
<rect x="1037" y="82" width="6" height="6" fill="#42adf2" fill-opacity="0.09"/>
<rect x="1049" y="82" width="6" height="6" fill="#42adf2" fill-opacity="0.04"/>
<rect x="1055" y="82" width="6" height="6" fill="#42adf2" fill-opacity="0.07"/>
<rect x="1079" y="82" width="6" height="6" fill="#42adf2" fill-opacity="0.20"/>
<rect x="1085" y="82" width="6" height="6" fill="#42adf2" fill-opacity="0.15"/>
<rect x="1127" y="82" width="6" height="6" fill="#42adf2" fill-opacity="0.25"/>
<rect x="1151" y="82" width="6" height="6" fill="#42adf2" fill-opacity="0.25"/>
<rect x="1181" y="82" width="6" height="6" fill="#42adf2" fill-opacity="0.19"/>
<rect x="1187" y="82" width="6" height="6" fill="#42adf2" fill-opacity="0.21"/>
<rect x="1193" y="82" width="6" height="6" fill="#42adf2" fill-opacity="0.17"/>
<rect x="1217" y="82" width="6" height="6" fill="#42adf2" fill-opacity="0.03"/>
<rect x="1223" y="82" width="6" height="6" fill="#42adf2" fill-opacity="0.06"/>
<rect x="1253" y="82" width="6" height="6" fill="#42adf2" fill-opacity="0.08"/>
<rect x="1265" y="82" width="6" height="6" fill="#42adf2" fill-opacity="0.03"/>
<rect x="1277" y="82" width="6" height="6" fill="#42adf2" fill-opacity="0.11"/>
<rect x="1283" y="82" width="6" height="6" fill="#42adf2" fill-opacity="0.16"/>
<rect x="1295" y="82" width="6" height="6" fill="#42adf2" fill-opacity="0.17"/>
<rect x="1307" y="82" width="6" height="6" fill="#42adf2" fill-opacity="0.24"/>
<rect x="1313" y="82" width="6" height="6" fill="#42adf2" fill-opacity="0.06"/>
<rect x="1319" y="82" width="6" height="6" fill="#42adf2" fill-opacity="0.17"/>
<rect x="1343" y="82" width="6" height="6" fill="#42adf2" fill-opacity="0.03"/>
<rect x="1391" y="82" width="6" height="6" fill="#42adf2" fill-opacity="0.23"/>
<rect x="1397" y="82" width="6" height="6" fill="#42adf2" fill-opacity="0.15"/>
<rect x="1409" y="82" width="6" height="6" fill="#42adf2" fill-opacity="0.04"/>
<rect x="1421" y="82" width="6" height="6" fill="#42adf2" fill-opacity="0.15"/>
<rect x="1433" y="82" width="6" height="6" fill="#42adf2" fill-opacity="0.07"/>
<rect x="1463" y="82" width="6" height="6" fill="#42adf2" fill-opacity="0.10"/>
<rect x="1469" y="82" width="6" height="6" fill="#42adf2" fill-opacity="0.04"/>
<rect x="1493" y="82" width="6" height="6" fill="#42adf2" fill-opacity="0.22"/>
<rect x="1523" y="82" width="6" height="6" fill="#42adf2" fill-opacity="0.05"/>
<rect x="1529" y="82" width="6" height="6" fill="#42adf2" fill-opacity="0.04"/>
<rect x="1535" y="82" width="6" height="6" fill="#42adf2" fill-opacity="0.19"/>
<rect x="1559" y="82" width="6" height="6" fill="#42adf2" fill-opacity="0.15"/>
<rect x="1583" y="82" width="6" height="6" fill="#42adf2" fill-opacity="0.17"/>
<rect x="1595" y="82" width="6" height="6" fill="#42adf2" fill-opacity="0.22"/>
<rect x="1601" y="82" width="6" height="6" fill="#42adf2" fill-opacity="0.09"/>
<rect x="1607" y="82" width="6" height="6" fill="#42adf2" fill-opacity="0.19"/>
<rect x="1625" y="82" width="6" height="6" fill="#42adf2" fill-opacity="0.22"/>
<rect x="1631" y="82" width="6" height="6" fill="#42adf2" fill-opacity="0.08"/>
<rect x="1709" y="82" width="6" height="6" fill="#42adf2" fill-opacity="0.08"/>
<rect x="1721" y="82" width="6" height="6" fill="#42adf2" fill-opacity="0.23"/>
<rect x="1727" y="82" width="6" height="6" fill="#42adf2" fill-opacity="0.04"/>
<rect x="1733" y="82" width="6" height="6" fill="#42adf2" fill-opacity="0.23"/>
<rect x="1739" y="82" width="6" height="6" fill="#42adf2" fill-opacity="0.06"/>
<rect x="1745" y="82" width="6" height="6" fill="#42adf2" fill-opacity="0.04"/>
<rect x="1775" y="82" width="6" height="6" fill="#42adf2" fill-opacity="0.16"/>
<rect x="1805" y="82" width="6" height="6" fill="#42adf2" fill-opacity="0.22"/>
<rect x="1823" y="82" width="6" height="6" fill="#42adf2" fill-opacity="0.08"/>
<rect x="1829" y="82" width="6" height="6" fill="#42adf2" fill-opacity="0.04"/>
<rect x="1865" y="82" width="6" height="6" fill="#42adf2" fill-opacity="0.05"/>
<rect x="1871" y="82" width="6" height="6" fill="#42adf2" fill-opacity="0.20"/>
<rect x="1877" y="82" width="6" height="6" fill="#42adf2" fill-opacity="0.10"/>
<rect x="1889" y="82" width="6" height="6" fill="#42adf2" fill-opacity="0.09"/>
<rect x="1895" y="82" width="6" height="6" fill="#42adf2" fill-opacity="0.19"/>
<rect x="965" y="88" width="6" height="6" fill="#42adf2" fill-opacity="0.16"/>
<rect x="995" y="88" width="6" height="6" fill="#42adf2" fill-opacity="0.19"/>
<rect x="1013" y="88" width="6" height="6" fill="#42adf2" fill-opacity="0.30"/>
<rect x="1025" y="88" width="6" height="6" fill="#42adf2" fill-opacity="0.35"/>
<rect x="1031" y="88" width="6" height="6" fill="#42adf2" fill-opacity="0.34"/>
<rect x="1037" y="88" width="6" height="6" fill="#42adf2" fill-opacity="0.05"/>
<rect x="1043" y="88" width="6" height="6" fill="#42adf2" fill-opacity="0.32"/>
<rect x="1055" y="88" width="6" height="6" fill="#42adf2" fill-opacity="0.22"/>
<rect x="1073" y="88" width="6" height="6" fill="#42adf2" fill-opacity="0.22"/>
<rect x="1079" y="88" width="6" height="6" fill="#42adf2" fill-opacity="0.34"/>
<rect x="1085" y="88" width="6" height="6" fill="#42adf2" fill-opacity="0.38"/>
<rect x="1091" y="88" width="6" height="6" fill="#42adf2" fill-opacity="0.13"/>
<rect x="1109" y="88" width="6" height="6" fill="#42adf2" fill-opacity="0.27"/>
<rect x="1115" y="88" width="6" height="6" fill="#42adf2" fill-opacity="0.33"/>
<rect x="1139" y="88" width="6" height="6" fill="#42adf2" fill-opacity="0.19"/>
<rect x="1145" y="88" width="6" height="6" fill="#42adf2" fill-opacity="0.36"/>
<rect x="1151" y="88" width="6" height="6" fill="#42adf2" fill-opacity="0.36"/>
<rect x="1157" y="88" width="6" height="6" fill="#42adf2" fill-opacity="0.12"/>
<rect x="1163" y="88" width="6" height="6" fill="#42adf2" fill-opacity="0.37"/>
<rect x="1175" y="88" width="6" height="6" fill="#42adf2" fill-opacity="0.36"/>
<rect x="1181" y="88" width="6" height="6" fill="#42adf2" fill-opacity="0.21"/>
<rect x="1211" y="88" width="6" height="6" fill="#42adf2" fill-opacity="0.16"/>
<rect x="1217" y="88" width="6" height="6" fill="#42adf2" fill-opacity="0.35"/>
<rect x="1235" y="88" width="6" height="6" fill="#42adf2" fill-opacity="0.20"/>
<rect x="1253" y="88" width="6" height="6" fill="#42adf2" fill-opacity="0.21"/>
<rect x="1265" y="88" width="6" height="6" fill="#42adf2" fill-opacity="0.12"/>
<rect x="1271" y="88" width="6" height="6" fill="#42adf2" fill-opacity="0.30"/>
<rect x="1283" y="88" width="6" height="6" fill="#42adf2" fill-opacity="0.10"/>
<rect x="1289" y="88" width="6" height="6" fill="#42adf2" fill-opacity="0.16"/>
<rect x="1301" y="88" width="6" height="6" fill="#42adf2" fill-opacity="0.16"/>
<rect x="1307" y="88" width="6" height="6" fill="#42adf2" fill-opacity="0.39"/>
<rect x="1319" y="88" width="6" height="6" fill="#42adf2" fill-opacity="0.39"/>
<rect x="1325" y="88" width="6" height="6" fill="#42adf2" fill-opacity="0.18"/>
<rect x="1355" y="88" width="6" height="6" fill="#42adf2" fill-opacity="0.27"/>
<rect x="1361" y="88" width="6" height="6" fill="#42adf2" fill-opacity="0.12"/>
<rect x="1367" y="88" width="6" height="6" fill="#42adf2" fill-opacity="0.06"/>
<rect x="1373" y="88" width="6" height="6" fill="#42adf2" fill-opacity="0.33"/>
<rect x="1403" y="88" width="6" height="6" fill="#42adf2" fill-opacity="0.26"/>
<rect x="1451" y="88" width="6" height="6" fill="#42adf2" fill-opacity="0.30"/>
<rect x="1499" y="88" width="6" height="6" fill="#42adf2" fill-opacity="0.27"/>
<rect x="1505" y="88" width="6" height="6" fill="#42adf2" fill-opacity="0.20"/>
<rect x="1529" y="88" width="6" height="6" fill="#42adf2" fill-opacity="0.20"/>
<rect x="1565" y="88" width="6" height="6" fill="#42adf2" fill-opacity="0.28"/>
<rect x="1577" y="88" width="6" height="6" fill="#42adf2" fill-opacity="0.22"/>
<rect x="1589" y="88" width="6" height="6" fill="#42adf2" fill-opacity="0.24"/>
<rect x="1595" y="88" width="6" height="6" fill="#42adf2" fill-opacity="0.32"/>
<rect x="1613" y="88" width="6" height="6" fill="#42adf2" fill-opacity="0.25"/>
<rect x="1667" y="88" width="6" height="6" fill="#42adf2" fill-opacity="0.29"/>
<rect x="1673" y="88" width="6" height="6" fill="#42adf2" fill-opacity="0.32"/>
<rect x="1679" y="88" width="6" height="6" fill="#42adf2" fill-opacity="0.39"/>
<rect x="1685" y="88" width="6" height="6" fill="#42adf2" fill-opacity="0.07"/>
<rect x="1691" y="88" width="6" height="6" fill="#42adf2" fill-opacity="0.19"/>
<rect x="1697" y="88" width="6" height="6" fill="#42adf2" fill-opacity="0.20"/>
<rect x="1715" y="88" width="6" height="6" fill="#42adf2" fill-opacity="0.14"/>
<rect x="1721" y="88" width="6" height="6" fill="#42adf2" fill-opacity="0.31"/>
<rect x="1739" y="88" width="6" height="6" fill="#42adf2" fill-opacity="0.33"/>
<rect x="1745" y="88" width="6" height="6" fill="#42adf2" fill-opacity="0.12"/>
<rect x="1751" y="88" width="6" height="6" fill="#42adf2" fill-opacity="0.32"/>
<rect x="1781" y="88" width="6" height="6" fill="#42adf2" fill-opacity="0.39"/>
<rect x="1787" y="88" width="6" height="6" fill="#42adf2" fill-opacity="0.27"/>
<rect x="1811" y="88" width="6" height="6" fill="#42adf2" fill-opacity="0.24"/>
<rect x="1817" y="88" width="6" height="6" fill="#42adf2" fill-opacity="0.34"/>
<rect x="1823" y="88" width="6" height="6" fill="#42adf2" fill-opacity="0.35"/>
<rect x="1829" y="88" width="6" height="6" fill="#42adf2" fill-opacity="0.18"/>
<rect x="1835" y="88" width="6" height="6" fill="#42adf2" fill-opacity="0.20"/>
<rect x="1841" y="88" width="6" height="6" fill="#42adf2" fill-opacity="0.05"/>
<rect x="1853" y="88" width="6" height="6" fill="#42adf2" fill-opacity="0.14"/>
<rect x="1859" y="88" width="6" height="6" fill="#42adf2" fill-opacity="0.22"/>
<rect x="1883" y="88" width="6" height="6" fill="#42adf2" fill-opacity="0.38"/>
<rect x="1895" y="88" width="6" height="6" fill="#42adf2" fill-opacity="0.34"/>
<rect x="977" y="94" width="6" height="6" fill="#42adf2" fill-opacity="0.12"/>
<rect x="989" y="94" width="6" height="6" fill="#42adf2" fill-opacity="0.00"/>
<rect x="1013" y="94" width="6" height="6" fill="#42adf2" fill-opacity="0.02"/>
<rect x="1037" y="94" width="6" height="6" fill="#42adf2" fill-opacity="0.14"/>
<rect x="1049" y="94" width="6" height="6" fill="#42adf2" fill-opacity="0.13"/>
<rect x="1091" y="94" width="6" height="6" fill="#42adf2" fill-opacity="0.10"/>
<rect x="1139" y="94" width="6" height="6" fill="#42adf2" fill-opacity="0.07"/>
<rect x="1145" y="94" width="6" height="6" fill="#42adf2" fill-opacity="0.07"/>
<rect x="1151" y="94" width="6" height="6" fill="#42adf2" fill-opacity="0.07"/>
<rect x="1175" y="94" width="6" height="6" fill="#42adf2" fill-opacity="0.13"/>
<rect x="1223" y="94" width="6" height="6" fill="#42adf2" fill-opacity="0.10"/>
<rect x="1235" y="94" width="6" height="6" fill="#42adf2" fill-opacity="0.09"/>
<rect x="1283" y="94" width="6" height="6" fill="#42adf2" fill-opacity="0.11"/>
<rect x="1451" y="94" width="6" height="6" fill="#42adf2" fill-opacity="0.11"/>
<rect x="1469" y="94" width="6" height="6" fill="#42adf2" fill-opacity="0.05"/>
<rect x="1475" y="94" width="6" height="6" fill="#42adf2" fill-opacity="0.03"/>
<rect x="1571" y="94" width="6" height="6" fill="#42adf2" fill-opacity="0.03"/>
<rect x="1577" y="94" width="6" height="6" fill="#42adf2" fill-opacity="0.12"/>
<rect x="1661" y="94" width="6" height="6" fill="#42adf2" fill-opacity="0.09"/>
<rect x="1667" y="94" width="6" height="6" fill="#42adf2" fill-opacity="0.02"/>
<rect x="1697" y="94" width="6" height="6" fill="#42adf2" fill-opacity="0.06"/>
<rect x="1733" y="94" width="6" height="6" fill="#42adf2" fill-opacity="0.10"/>
<rect x="1745" y="94" width="6" height="6" fill="#42adf2" fill-opacity="0.00"/>
<rect x="1751" y="94" width="6" height="6" fill="#42adf2" fill-opacity="0.10"/>
<rect x="1757" y="94" width="6" height="6" fill="#42adf2" fill-opacity="0.14"/>
<rect x="1763" y="94" width="6" height="6" fill="#42adf2" fill-opacity="0.13"/>
<rect x="1769" y="94" width="6" height="6" fill="#42adf2" fill-opacity="0.00"/>
<rect x="1793" y="94" width="6" height="6" fill="#42adf2" fill-opacity="0.01"/>
<rect x="1823" y="94" width="6" height="6" fill="#42adf2" fill-opacity="0.09"/>
<rect x="1865" y="94" width="6" height="6" fill="#42adf2" fill-opacity="0.00"/>
<rect x="1883" y="94" width="6" height="6" fill="#42adf2" fill-opacity="0.05"/>
<rect x="1895" y="94" width="6" height="6" fill="#42adf2" fill-opacity="0.13"/>
<rect x="971" y="118" width="6" height="6" fill="#808080" fill-opacity="0.05"/>
<rect x="983" y="118" width="6" height="6" fill="#808080" fill-opacity="0.07"/>
<rect x="989" y="118" width="6" height="6" fill="#808080" fill-opacity="0.08"/>
<rect x="995" y="118" width="6" height="6" fill="#808080" fill-opacity="0.07"/>
<rect x="1007" y="118" width="6" height="6" fill="#808080" fill-opacity="0.05"/>
<rect x="1037" y="118" width="6" height="6" fill="#808080" fill-opacity="0.02"/>
<rect x="1061" y="118" width="6" height="6" fill="#808080" fill-opacity="0.06"/>
<rect x="1085" y="118" width="6" height="6" fill="#808080" fill-opacity="0.05"/>
<rect x="1097" y="118" width="6" height="6" fill="#808080" fill-opacity="0.07"/>
<rect x="1121" y="118" width="6" height="6" fill="#808080" fill-opacity="0.02"/>
<rect x="1127" y="118" width="6" height="6" fill="#808080" fill-opacity="0.05"/>
<rect x="1151" y="118" width="6" height="6" fill="#808080" fill-opacity="0.08"/>
<rect x="1175" y="118" width="6" height="6" fill="#808080" fill-opacity="0.08"/>
<rect x="1199" y="118" width="6" height="6" fill="#808080" fill-opacity="0.03"/>
<rect x="1217" y="118" width="6" height="6" fill="#808080" fill-opacity="0.07"/>
<rect x="1229" y="118" width="6" height="6" fill="#808080" fill-opacity="0.06"/>
<rect x="1247" y="118" width="6" height="6" fill="#808080" fill-opacity="0.04"/>
<rect x="1271" y="118" width="6" height="6" fill="#808080" fill-opacity="0.08"/>
<rect x="1283" y="118" width="6" height="6" fill="#808080" fill-opacity="0.06"/>
<rect x="1319" y="118" width="6" height="6" fill="#808080" fill-opacity="0.03"/>
<rect x="1325" y="118" width="6" height="6" fill="#808080" fill-opacity="0.07"/>
<rect x="1331" y="118" width="6" height="6" fill="#808080" fill-opacity="0.06"/>
<rect x="1337" y="118" width="6" height="6" fill="#808080" fill-opacity="0.06"/>
<rect x="1343" y="118" width="6" height="6" fill="#808080" fill-opacity="0.02"/>
<rect x="1355" y="118" width="6" height="6" fill="#808080" fill-opacity="0.03"/>
<rect x="1373" y="118" width="6" height="6" fill="#808080" fill-opacity="0.06"/>
<rect x="1379" y="118" width="6" height="6" fill="#808080" fill-opacity="0.06"/>
<rect x="1385" y="118" width="6" height="6" fill="#808080" fill-opacity="0.02"/>
<rect x="1415" y="118" width="6" height="6" fill="#808080" fill-opacity="0.07"/>
<rect x="1421" y="118" width="6" height="6" fill="#808080" fill-opacity="0.09"/>
<rect x="1445" y="118" width="6" height="6" fill="#808080" fill-opacity="0.02"/>
<rect x="1451" y="118" width="6" height="6" fill="#808080" fill-opacity="0.03"/>
<rect x="1457" y="118" width="6" height="6" fill="#808080" fill-opacity="0.02"/>
<rect x="1493" y="118" width="6" height="6" fill="#808080" fill-opacity="0.06"/>
<rect x="1499" y="118" width="6" height="6" fill="#808080" fill-opacity="0.03"/>
<rect x="1511" y="118" width="6" height="6" fill="#808080" fill-opacity="0.06"/>
<rect x="1535" y="118" width="6" height="6" fill="#808080" fill-opacity="0.05"/>
<rect x="1541" y="118" width="6" height="6" fill="#808080" fill-opacity="0.09"/>
<rect x="1553" y="118" width="6" height="6" fill="#808080" fill-opacity="0.02"/>
<rect x="1559" y="118" width="6" height="6" fill="#808080" fill-opacity="0.04"/>
<rect x="1583" y="118" width="6" height="6" fill="#808080" fill-opacity="0.08"/>
<rect x="1607" y="118" width="6" height="6" fill="#808080" fill-opacity="0.03"/>
<rect x="1631" y="118" width="6" height="6" fill="#808080" fill-opacity="0.06"/>
<rect x="1643" y="118" width="6" height="6" fill="#808080" fill-opacity="0.04"/>
<rect x="1649" y="118" width="6" height="6" fill="#808080" fill-opacity="0.03"/>
<rect x="1661" y="118" width="6" height="6" fill="#808080" fill-opacity="0.04"/>
<rect x="1667" y="118" width="6" height="6" fill="#808080" fill-opacity="0.07"/>
<rect x="1673" y="118" width="6" height="6" fill="#808080" fill-opacity="0.07"/>
<rect x="1679" y="118" width="6" height="6" fill="#808080" fill-opacity="0.02"/>
<rect x="1691" y="118" width="6" height="6" fill="#808080" fill-opacity="0.09"/>
<rect x="1709" y="118" width="6" height="6" fill="#808080" fill-opacity="0.05"/>
<rect x="1715" y="118" width="6" height="6" fill="#808080" fill-opacity="0.09"/>
<rect x="1739" y="118" width="6" height="6" fill="#808080" fill-opacity="0.08"/>
<rect x="1757" y="118" width="6" height="6" fill="#808080" fill-opacity="0.04"/>
<rect x="1763" y="118" width="6" height="6" fill="#808080" fill-opacity="0.07"/>
<rect x="1775" y="118" width="6" height="6" fill="#808080" fill-opacity="0.08"/>
<rect x="1781" y="118" width="6" height="6" fill="#808080" fill-opacity="0.05"/>
<rect x="1787" y="118" width="6" height="6" fill="#808080" fill-opacity="0.04"/>
<rect x="1799" y="118" width="6" height="6" fill="#808080" fill-opacity="0.03"/>
<rect x="1811" y="118" width="6" height="6" fill="#808080" fill-opacity="0.08"/>
<rect x="1817" y="118" width="6" height="6" fill="#808080" fill-opacity="0.09"/>
<rect x="1823" y="118" width="6" height="6" fill="#808080" fill-opacity="0.08"/>
<rect x="1835" y="118" width="6" height="6" fill="#808080" fill-opacity="0.05"/>
<rect x="1841" y="118" width="6" height="6" fill="#808080" fill-opacity="0.04"/>
<rect x="1847" y="118" width="6" height="6" fill="#808080" fill-opacity="0.05"/>
<rect x="1871" y="118" width="6" height="6" fill="#808080" fill-opacity="0.04"/>
<rect x="1883" y="118" width="6" height="6" fill="#808080" fill-opacity="0.07"/>
<rect x="1889" y="118" width="6" height="6" fill="#808080" fill-opacity="0.09"/>
<rect x="1895" y="118" width="6" height="6" fill="#808080" fill-opacity="0.08"/>
<rect x="965" y="124" width="6" height="6" fill="#808080" fill-opacity="0.03"/>
<rect x="971" y="124" width="6" height="6" fill="#808080" fill-opacity="0.09"/>
<rect x="983" y="124" width="6" height="6" fill="#808080" fill-opacity="0.05"/>
<rect x="995" y="124" width="6" height="6" fill="#808080" fill-opacity="0.07"/>
<rect x="1001" y="124" width="6" height="6" fill="#808080" fill-opacity="0.03"/>
<rect x="1019" y="124" width="6" height="6" fill="#808080" fill-opacity="0.03"/>
<rect x="1025" y="124" width="6" height="6" fill="#808080" fill-opacity="0.07"/>
<rect x="1037" y="124" width="6" height="6" fill="#808080" fill-opacity="0.04"/>
<rect x="1067" y="124" width="6" height="6" fill="#808080" fill-opacity="0.03"/>
<rect x="1079" y="124" width="6" height="6" fill="#808080" fill-opacity="0.08"/>
<rect x="1085" y="124" width="6" height="6" fill="#808080" fill-opacity="0.08"/>
<rect x="1091" y="124" width="6" height="6" fill="#808080" fill-opacity="0.09"/>
<rect x="1109" y="124" width="6" height="6" fill="#808080" fill-opacity="0.09"/>
<rect x="1127" y="124" width="6" height="6" fill="#808080" fill-opacity="0.03"/>
<rect x="1139" y="124" width="6" height="6" fill="#808080" fill-opacity="0.03"/>
<rect x="1145" y="124" width="6" height="6" fill="#808080" fill-opacity="0.07"/>
<rect x="1151" y="124" width="6" height="6" fill="#808080" fill-opacity="0.06"/>
<rect x="1157" y="124" width="6" height="6" fill="#808080" fill-opacity="0.06"/>
<rect x="1163" y="124" width="6" height="6" fill="#808080" fill-opacity="0.08"/>
<rect x="1181" y="124" width="6" height="6" fill="#808080" fill-opacity="0.08"/>
<rect x="1187" y="124" width="6" height="6" fill="#808080" fill-opacity="0.08"/>
<rect x="1193" y="124" width="6" height="6" fill="#808080" fill-opacity="0.09"/>
<rect x="1229" y="124" width="6" height="6" fill="#808080" fill-opacity="0.10"/>
<rect x="1235" y="124" width="6" height="6" fill="#808080" fill-opacity="0.03"/>
<rect x="1241" y="124" width="6" height="6" fill="#808080" fill-opacity="0.04"/>
<rect x="1253" y="124" width="6" height="6" fill="#808080" fill-opacity="0.03"/>
<rect x="1265" y="124" width="6" height="6" fill="#808080" fill-opacity="0.02"/>
<rect x="1295" y="124" width="6" height="6" fill="#808080" fill-opacity="0.09"/>
<rect x="1307" y="124" width="6" height="6" fill="#808080" fill-opacity="0.03"/>
<rect x="1325" y="124" width="6" height="6" fill="#808080" fill-opacity="0.03"/>
<rect x="1331" y="124" width="6" height="6" fill="#808080" fill-opacity="0.03"/>
<rect x="1349" y="124" width="6" height="6" fill="#808080" fill-opacity="0.07"/>
<rect x="1361" y="124" width="6" height="6" fill="#808080" fill-opacity="0.09"/>
<rect x="1373" y="124" width="6" height="6" fill="#808080" fill-opacity="0.05"/>
<rect x="1391" y="124" width="6" height="6" fill="#808080" fill-opacity="0.10"/>
<rect x="1403" y="124" width="6" height="6" fill="#808080" fill-opacity="0.04"/>
<rect x="1409" y="124" width="6" height="6" fill="#808080" fill-opacity="0.05"/>
<rect x="1445" y="124" width="6" height="6" fill="#808080" fill-opacity="0.06"/>
<rect x="1463" y="124" width="6" height="6" fill="#808080" fill-opacity="0.05"/>
<rect x="1475" y="124" width="6" height="6" fill="#808080" fill-opacity="0.06"/>
<rect x="1481" y="124" width="6" height="6" fill="#808080" fill-opacity="0.05"/>
<rect x="1493" y="124" width="6" height="6" fill="#808080" fill-opacity="0.03"/>
<rect x="1541" y="124" width="6" height="6" fill="#808080" fill-opacity="0.07"/>
<rect x="1547" y="124" width="6" height="6" fill="#808080" fill-opacity="0.07"/>
<rect x="1553" y="124" width="6" height="6" fill="#808080" fill-opacity="0.06"/>
<rect x="1571" y="124" width="6" height="6" fill="#808080" fill-opacity="0.06"/>
<rect x="1577" y="124" width="6" height="6" fill="#808080" fill-opacity="0.10"/>
<rect x="1583" y="124" width="6" height="6" fill="#808080" fill-opacity="0.04"/>
<rect x="1595" y="124" width="6" height="6" fill="#808080" fill-opacity="0.07"/>
<rect x="1613" y="124" width="6" height="6" fill="#808080" fill-opacity="0.06"/>
<rect x="1625" y="124" width="6" height="6" fill="#808080" fill-opacity="0.03"/>
<rect x="1631" y="124" width="6" height="6" fill="#808080" fill-opacity="0.04"/>
<rect x="1637" y="124" width="6" height="6" fill="#808080" fill-opacity="0.04"/>
<rect x="1643" y="124" width="6" height="6" fill="#808080" fill-opacity="0.03"/>
<rect x="1679" y="124" width="6" height="6" fill="#808080" fill-opacity="0.08"/>
<rect x="1709" y="124" width="6" height="6" fill="#808080" fill-opacity="0.04"/>
<rect x="1715" y="124" width="6" height="6" fill="#808080" fill-opacity="0.06"/>
<rect x="1721" y="124" width="6" height="6" fill="#808080" fill-opacity="0.07"/>
<rect x="1727" y="124" width="6" height="6" fill="#808080" fill-opacity="0.05"/>
<rect x="1739" y="124" width="6" height="6" fill="#808080" fill-opacity="0.06"/>
<rect x="1751" y="124" width="6" height="6" fill="#808080" fill-opacity="0.10"/>
<rect x="1757" y="124" width="6" height="6" fill="#808080" fill-opacity="0.08"/>
<rect x="1763" y="124" width="6" height="6" fill="#808080" fill-opacity="0.03"/>
<rect x="1775" y="124" width="6" height="6" fill="#808080" fill-opacity="0.02"/>
<rect x="1781" y="124" width="6" height="6" fill="#808080" fill-opacity="0.06"/>
<rect x="1793" y="124" width="6" height="6" fill="#808080" fill-opacity="0.04"/>
<rect x="1811" y="124" width="6" height="6" fill="#808080" fill-opacity="0.05"/>
<rect x="1817" y="124" width="6" height="6" fill="#808080" fill-opacity="0.07"/>
<rect x="1889" y="124" width="6" height="6" fill="#808080" fill-opacity="0.09"/>
<rect x="1895" y="124" width="6" height="6" fill="#808080" fill-opacity="0.08"/>
<rect x="1336" y="128" width="6" height="6" fill="#808080" fill-opacity="0.06"/>
<rect x="1336" y="140" width="6" height="6" fill="#808080" fill-opacity="0.05"/>
<rect x="1336" y="164" width="6" height="6" fill="#808080" fill-opacity="0.06"/>
<rect x="1336" y="170" width="6" height="6" fill="#808080" fill-opacity="0.08"/>
<rect x="1336" y="176" width="6" height="6" fill="#808080" fill-opacity="0.05"/>
<rect x="1336" y="182" width="6" height="6" fill="#808080" fill-opacity="0.05"/>
<rect x="1336" y="188" width="6" height="6" fill="#808080" fill-opacity="0.08"/>
<rect x="1336" y="200" width="6" height="6" fill="#808080" fill-opacity="0.06"/>
<rect x="1336" y="206" width="6" height="6" fill="#808080" fill-opacity="0.04"/>
<rect x="1336" y="212" width="6" height="6" fill="#808080" fill-opacity="0.07"/>
<rect x="1336" y="218" width="6" height="6" fill="#808080" fill-opacity="0.03"/>
<rect x="1336" y="230" width="6" height="6" fill="#808080" fill-opacity="0.09"/>
<rect x="1336" y="248" width="6" height="6" fill="#808080" fill-opacity="0.05"/>
<rect x="1336" y="260" width="6" height="6" fill="#808080" fill-opacity="0.02"/>
<rect x="1336" y="266" width="6" height="6" fill="#808080" fill-opacity="0.06"/>
<rect x="1336" y="284" width="6" height="6" fill="#808080" fill-opacity="0.10"/>
<rect x="971" y="279" width="6" height="7" fill="#606060" fill-opacity="0.35"/>
<rect x="983" y="279" width="6" height="7" fill="#606060" fill-opacity="0.76"/>
<rect x="1001" y="279" width="6" height="7" fill="#606060" fill-opacity="0.36"/>
<rect x="1007" y="279" width="6" height="7" fill="#606060" fill-opacity="0.49"/>
<rect x="1037" y="279" width="6" height="7" fill="#606060" fill-opacity="0.54"/>
<rect x="1049" y="279" width="6" height="7" fill="#606060" fill-opacity="0.47"/>
<rect x="1061" y="279" width="6" height="7" fill="#606060" fill-opacity="0.32"/>
<rect x="1085" y="279" width="6" height="7" fill="#606060" fill-opacity="0.73"/>
<rect x="1115" y="279" width="6" height="7" fill="#606060" fill-opacity="0.21"/>
<rect x="1121" y="279" width="6" height="7" fill="#606060" fill-opacity="0.46"/>
<rect x="1133" y="279" width="6" height="7" fill="#606060" fill-opacity="0.23"/>
<rect x="1151" y="279" width="6" height="7" fill="#606060" fill-opacity="0.80"/>
<rect x="1163" y="279" width="6" height="7" fill="#606060" fill-opacity="0.39"/>
<rect x="1175" y="279" width="6" height="7" fill="#606060" fill-opacity="0.58"/>
<rect x="1181" y="279" width="6" height="7" fill="#606060" fill-opacity="0.31"/>
<rect x="1205" y="279" width="6" height="7" fill="#606060" fill-opacity="0.45"/>
<rect x="1217" y="279" width="6" height="7" fill="#606060" fill-opacity="0.55"/>
<rect x="1241" y="279" width="6" height="7" fill="#606060" fill-opacity="0.19"/>
<rect x="1247" y="279" width="6" height="7" fill="#606060" fill-opacity="0.63"/>
<rect x="1253" y="279" width="6" height="7" fill="#606060" fill-opacity="0.17"/>
<rect x="1259" y="279" width="6" height="7" fill="#606060" fill-opacity="0.47"/>
<rect x="1283" y="279" width="6" height="7" fill="#606060" fill-opacity="0.11"/>
<rect x="1295" y="279" width="6" height="7" fill="#606060" fill-opacity="0.60"/>
<rect x="1301" y="279" width="6" height="7" fill="#606060" fill-opacity="0.22"/>
<rect x="1307" y="279" width="6" height="7" fill="#606060" fill-opacity="0.17"/>
<rect x="1325" y="279" width="6" height="7" fill="#606060" fill-opacity="0.41"/>
<rect x="1331" y="279" width="6" height="7" fill="#606060" fill-opacity="0.14"/>
<rect x="1355" y="279" width="6" height="7" fill="#606060" fill-opacity="0.53"/>
<rect x="1361" y="279" width="6" height="7" fill="#606060" fill-opacity="0.13"/>
<rect x="1379" y="279" width="6" height="7" fill="#606060" fill-opacity="0.73"/>
<rect x="1391" y="279" width="6" height="7" fill="#606060" fill-opacity="0.52"/>
<rect x="1415" y="279" width="6" height="7" fill="#606060" fill-opacity="0.37"/>
<rect x="1427" y="279" width="6" height="7" fill="#606060" fill-opacity="0.32"/>
<rect x="1451" y="279" width="6" height="7" fill="#606060" fill-opacity="0.22"/>
<rect x="1457" y="279" width="6" height="7" fill="#606060" fill-opacity="0.23"/>
<rect x="1469" y="279" width="6" height="7" fill="#606060" fill-opacity="0.49"/>
<rect x="1475" y="279" width="6" height="7" fill="#606060" fill-opacity="0.47"/>
<rect x="1481" y="279" width="6" height="7" fill="#606060" fill-opacity="0.38"/>
<rect x="1487" y="279" width="6" height="7" fill="#606060" fill-opacity="0.19"/>
<rect x="1499" y="279" width="6" height="7" fill="#606060" fill-opacity="0.27"/>
<rect x="1505" y="279" width="6" height="7" fill="#606060" fill-opacity="0.30"/>
<rect x="1511" y="279" width="6" height="7" fill="#606060" fill-opacity="0.12"/>
<rect x="1523" y="279" width="6" height="7" fill="#606060" fill-opacity="0.21"/>
<rect x="1535" y="279" width="6" height="7" fill="#606060" fill-opacity="0.29"/>
<rect x="1547" y="279" width="6" height="7" fill="#606060" fill-opacity="0.41"/>
<rect x="1565" y="279" width="6" height="7" fill="#606060" fill-opacity="0.35"/>
<rect x="1577" y="279" width="6" height="7" fill="#606060" fill-opacity="0.77"/>
<rect x="1583" y="279" width="6" height="7" fill="#606060" fill-opacity="0.77"/>
<rect x="1595" y="279" width="6" height="7" fill="#606060" fill-opacity="0.42"/>
<rect x="1601" y="279" width="6" height="7" fill="#606060" fill-opacity="0.59"/>
<rect x="1607" y="279" width="6" height="7" fill="#606060" fill-opacity="0.73"/>
<rect x="1619" y="279" width="6" height="7" fill="#606060" fill-opacity="0.27"/>
<rect x="1631" y="279" width="6" height="7" fill="#606060" fill-opacity="0.71"/>
<rect x="1637" y="279" width="6" height="7" fill="#606060" fill-opacity="0.46"/>
<rect x="1649" y="279" width="6" height="7" fill="#606060" fill-opacity="0.64"/>
<rect x="1655" y="279" width="6" height="7" fill="#606060" fill-opacity="0.56"/>
<rect x="1667" y="279" width="6" height="7" fill="#606060" fill-opacity="0.37"/>
<rect x="1673" y="279" width="6" height="7" fill="#606060" fill-opacity="0.22"/>
<rect x="1685" y="279" width="6" height="7" fill="#606060" fill-opacity="0.56"/>
<rect x="1691" y="279" width="6" height="7" fill="#606060" fill-opacity="0.49"/>
<rect x="1697" y="279" width="6" height="7" fill="#606060" fill-opacity="0.45"/>
<rect x="1703" y="279" width="6" height="7" fill="#606060" fill-opacity="0.15"/>
<rect x="1709" y="279" width="6" height="7" fill="#606060" fill-opacity="0.26"/>
<rect x="1715" y="279" width="6" height="7" fill="#606060" fill-opacity="0.60"/>
<rect x="1721" y="279" width="6" height="7" fill="#606060" fill-opacity="0.38"/>
<rect x="1751" y="279" width="6" height="7" fill="#606060" fill-opacity="0.29"/>
<rect x="1757" y="279" width="6" height="7" fill="#606060" fill-opacity="0.58"/>
<rect x="1769" y="279" width="6" height="7" fill="#606060" fill-opacity="0.39"/>
<rect x="1787" y="279" width="6" height="7" fill="#606060" fill-opacity="0.69"/>
<rect x="1793" y="279" width="6" height="7" fill="#606060" fill-opacity="0.54"/>
<rect x="1799" y="279" width="6" height="7" fill="#606060" fill-opacity="0.18"/>
<rect x="1823" y="279" width="6" height="7" fill="#606060" fill-opacity="0.13"/>
<rect x="1829" y="279" width="6" height="7" fill="#606060" fill-opacity="0.24"/>
<rect x="1835" y="279" width="6" height="7" fill="#606060" fill-opacity="0.37"/>
<rect x="1841" y="279" width="6" height="7" fill="#606060" fill-opacity="0.32"/>
<rect x="1853" y="279" width="6" height="7" fill="#606060" fill-opacity="0.69"/>
<rect x="1871" y="279" width="6" height="7" fill="#606060" fill-opacity="0.40"/>
<rect x="1883" y="279" width="6" height="7" fill="#606060" fill-opacity="0.10"/>
<rect x="1901" y="279" width="6" height="7" fill="#606060" fill-opacity="0.13"/>
<rect x="965" y="273" width="6" height="6" fill="#808080" fill-opacity="0.06"/>
<rect x="971" y="273" width="6" height="6" fill="#808080" fill-opacity="0.16"/>
<rect x="977" y="273" width="6" height="6" fill="#808080" fill-opacity="0.18"/>
<rect x="989" y="273" width="6" height="6" fill="#808080" fill-opacity="0.15"/>
<rect x="1019" y="273" width="6" height="6" fill="#808080" fill-opacity="0.19"/>
<rect x="1067" y="273" width="6" height="6" fill="#808080" fill-opacity="0.15"/>
<rect x="1091" y="273" width="6" height="6" fill="#808080" fill-opacity="0.16"/>
<rect x="1097" y="273" width="6" height="6" fill="#808080" fill-opacity="0.15"/>
<rect x="1139" y="273" width="6" height="6" fill="#808080" fill-opacity="0.03"/>
<rect x="1157" y="273" width="6" height="6" fill="#808080" fill-opacity="0.08"/>
<rect x="1163" y="273" width="6" height="6" fill="#808080" fill-opacity="0.15"/>
<rect x="1175" y="273" width="6" height="6" fill="#808080" fill-opacity="0.06"/>
<rect x="1217" y="273" width="6" height="6" fill="#808080" fill-opacity="0.12"/>
<rect x="1247" y="273" width="6" height="6" fill="#808080" fill-opacity="0.14"/>
<rect x="1277" y="273" width="6" height="6" fill="#808080" fill-opacity="0.07"/>
<rect x="1289" y="273" width="6" height="6" fill="#808080" fill-opacity="0.03"/>
<rect x="1301" y="273" width="6" height="6" fill="#808080" fill-opacity="0.15"/>
<rect x="1313" y="273" width="6" height="6" fill="#808080" fill-opacity="0.08"/>
<rect x="1331" y="273" width="6" height="6" fill="#808080" fill-opacity="0.03"/>
<rect x="1337" y="273" width="6" height="6" fill="#808080" fill-opacity="0.20"/>
<rect x="1349" y="273" width="6" height="6" fill="#808080" fill-opacity="0.15"/>
<rect x="1367" y="273" width="6" height="6" fill="#808080" fill-opacity="0.11"/>
<rect x="1379" y="273" width="6" height="6" fill="#808080" fill-opacity="0.12"/>
<rect x="1385" y="273" width="6" height="6" fill="#808080" fill-opacity="0.19"/>
<rect x="1421" y="273" width="6" height="6" fill="#808080" fill-opacity="0.04"/>
<rect x="1427" y="273" width="6" height="6" fill="#808080" fill-opacity="0.16"/>
<rect x="1445" y="273" width="6" height="6" fill="#808080" fill-opacity="0.13"/>
<rect x="1463" y="273" width="6" height="6" fill="#808080" fill-opacity="0.16"/>
<rect x="1487" y="273" width="6" height="6" fill="#808080" fill-opacity="0.17"/>
<rect x="1523" y="273" width="6" height="6" fill="#808080" fill-opacity="0.03"/>
<rect x="1577" y="273" width="6" height="6" fill="#808080" fill-opacity="0.07"/>
<rect x="1589" y="273" width="6" height="6" fill="#808080" fill-opacity="0.14"/>
<rect x="1595" y="273" width="6" height="6" fill="#808080" fill-opacity="0.10"/>
<rect x="1607" y="273" width="6" height="6" fill="#808080" fill-opacity="0.03"/>
<rect x="1619" y="273" width="6" height="6" fill="#808080" fill-opacity="0.15"/>
<rect x="1625" y="273" width="6" height="6" fill="#808080" fill-opacity="0.17"/>
<rect x="1703" y="273" width="6" height="6" fill="#808080" fill-opacity="0.07"/>
<rect x="1727" y="273" width="6" height="6" fill="#808080" fill-opacity="0.04"/>
<rect x="1787" y="273" width="6" height="6" fill="#808080" fill-opacity="0.14"/>
<rect x="1847" y="273" width="6" height="6" fill="#808080" fill-opacity="0.05"/>
<rect x="1865" y="273" width="6" height="6" fill="#808080" fill-opacity="0.14"/>
<rect x="952" y="46" width="2" height="6" fill="#1c1c1c"/>
<rect x="954" y="46" width="6" height="6" fill="#000000" fill-opacity="0.04"/>
<rect x="960" y="46" width="6" height="6" fill="#000000" fill-opacity="0.04"/>
<rect x="952" y="52" width="2" height="6" fill="#8c8c8c"/>
<rect x="954" y="52" width="6" height="6" fill="#000000" fill-opacity="0.07"/>
<rect x="960" y="52" width="6" height="6" fill="#000000" fill-opacity="0.00"/>
<rect x="952" y="58" width="2" height="6" fill="#1c1c1c"/>
<rect x="954" y="58" width="6" height="6" fill="#000000" fill-opacity="0.08"/>
<rect x="960" y="58" width="6" height="6" fill="#000000" fill-opacity="0.01"/>
<rect x="952" y="64" width="2" height="6" fill="#1c1c1c"/>
<rect x="954" y="64" width="6" height="6" fill="#000000" fill-opacity="0.09"/>
<rect x="960" y="64" width="6" height="6" fill="#000000" fill-opacity="0.01"/>
<rect x="952" y="70" width="2" height="6" fill="#a0a0a0"/>
<rect x="954" y="70" width="6" height="6" fill="#000000" fill-opacity="0.04"/>
<rect x="960" y="70" width="6" height="6" fill="#000000" fill-opacity="0.02"/>
<rect x="952" y="76" width="2" height="6" fill="#1c1c1c"/>
<rect x="954" y="76" width="6" height="6" fill="#000000" fill-opacity="0.09"/>
<rect x="960" y="76" width="6" height="6" fill="#000000" fill-opacity="0.04"/>
<rect x="952" y="82" width="2" height="6" fill="#1c1c1c"/>
<rect x="954" y="82" width="6" height="6" fill="#000000" fill-opacity="0.11"/>
<rect x="960" y="82" width="6" height="6" fill="#000000" fill-opacity="0.03"/>
<rect x="952" y="88" width="2" height="6" fill="#a0a0a0"/>
<rect x="954" y="88" width="6" height="6" fill="#000000" fill-opacity="0.03"/>
<rect x="960" y="88" width="6" height="6" fill="#000000" fill-opacity="0.02"/>
<rect x="952" y="94" width="2" height="6" fill="#1c1c1c"/>
<rect x="954" y="94" width="6" height="6" fill="#000000" fill-opacity="0.08"/>
<rect x="960" y="94" width="6" height="6" fill="#000000" fill-opacity="0.04"/>
<rect x="952" y="100" width="2" height="6" fill="#1c1c1c"/>
<rect x="954" y="100" width="6" height="6" fill="#000000" fill-opacity="0.07"/>
<rect x="960" y="100" width="6" height="6" fill="#000000" fill-opacity="0.03"/>
<rect x="952" y="106" width="2" height="6" fill="#8c8c8c"/>
<rect x="954" y="106" width="6" height="6" fill="#000000" fill-opacity="0.12"/>
<rect x="960" y="106" width="6" height="6" fill="#000000" fill-opacity="0.01"/>
<rect x="952" y="112" width="2" height="6" fill="#a0a0a0"/>
<rect x="954" y="112" width="6" height="6" fill="#000000" fill-opacity="0.10"/>
<rect x="960" y="112" width="6" height="6" fill="#000000" fill-opacity="0.01"/>
<rect x="952" y="118" width="2" height="6" fill="#1c1c1c"/>
<rect x="954" y="118" width="6" height="6" fill="#000000" fill-opacity="0.06"/>
<rect x="960" y="118" width="6" height="6" fill="#000000" fill-opacity="0.00"/>
<rect x="952" y="124" width="2" height="6" fill="#1c1c1c"/>
<rect x="954" y="124" width="6" height="6" fill="#000000" fill-opacity="0.02"/>
<rect x="960" y="124" width="6" height="6" fill="#000000" fill-opacity="0.02"/>
<rect x="952" y="130" width="2" height="6" fill="#8c8c8c"/>
<rect x="954" y="130" width="6" height="6" fill="#000000" fill-opacity="0.07"/>
<rect x="960" y="130" width="6" height="6" fill="#000000" fill-opacity="0.00"/>
<rect x="952" y="136" width="2" height="6" fill="#8c8c8c"/>
<rect x="954" y="136" width="6" height="6" fill="#000000" fill-opacity="0.06"/>
<rect x="960" y="136" width="6" height="6" fill="#000000" fill-opacity="0.04"/>
<rect x="952" y="142" width="2" height="6" fill="#8c8c8c"/>
<rect x="954" y="142" width="6" height="6" fill="#000000" fill-opacity="0.08"/>
<rect x="960" y="142" width="6" height="6" fill="#000000" fill-opacity="0.04"/>
<rect x="952" y="148" width="2" height="6" fill="#1c1c1c"/>
<rect x="954" y="148" width="6" height="6" fill="#000000" fill-opacity="0.04"/>
<rect x="960" y="148" width="6" height="6" fill="#000000" fill-opacity="0.03"/>
<rect x="952" y="154" width="2" height="6" fill="#1c1c1c"/>
<rect x="954" y="154" width="6" height="6" fill="#000000" fill-opacity="0.10"/>
<rect x="960" y="154" width="6" height="6" fill="#000000" fill-opacity="0.03"/>
<rect x="952" y="160" width="2" height="6" fill="#1c1c1c"/>
<rect x="954" y="160" width="6" height="6" fill="#000000" fill-opacity="0.10"/>
<rect x="960" y="160" width="6" height="6" fill="#000000" fill-opacity="0.00"/>
<rect x="952" y="166" width="2" height="6" fill="#1c1c1c"/>
<rect x="954" y="166" width="6" height="6" fill="#000000" fill-opacity="0.07"/>
<rect x="960" y="166" width="6" height="6" fill="#000000" fill-opacity="0.02"/>
<rect x="952" y="172" width="2" height="6" fill="#1c1c1c"/>
<rect x="954" y="172" width="6" height="6" fill="#000000" fill-opacity="0.09"/>
<rect x="960" y="172" width="6" height="6" fill="#000000" fill-opacity="0.00"/>
<rect x="952" y="178" width="2" height="6" fill="#1c1c1c"/>
<rect x="954" y="178" width="6" height="6" fill="#000000" fill-opacity="0.03"/>
<rect x="960" y="178" width="6" height="6" fill="#000000" fill-opacity="0.02"/>
<rect x="952" y="184" width="2" height="6" fill="#1c1c1c"/>
<rect x="954" y="184" width="6" height="6" fill="#000000" fill-opacity="0.02"/>
<rect x="960" y="184" width="6" height="6" fill="#000000" fill-opacity="0.04"/>
<rect x="952" y="190" width="2" height="6" fill="#8c8c8c"/>
<rect x="954" y="190" width="6" height="6" fill="#000000" fill-opacity="0.05"/>
<rect x="960" y="190" width="6" height="6" fill="#000000" fill-opacity="0.01"/>
<rect x="952" y="196" width="2" height="6" fill="#a0a0a0"/>
<rect x="954" y="196" width="6" height="6" fill="#000000" fill-opacity="0.02"/>
<rect x="960" y="196" width="6" height="6" fill="#000000" fill-opacity="0.04"/>
<rect x="952" y="202" width="2" height="6" fill="#a0a0a0"/>
<rect x="954" y="202" width="6" height="6" fill="#000000" fill-opacity="0.03"/>
<rect x="960" y="202" width="6" height="6" fill="#000000" fill-opacity="0.00"/>
<rect x="952" y="208" width="2" height="6" fill="#1c1c1c"/>
<rect x="954" y="208" width="6" height="6" fill="#000000" fill-opacity="0.03"/>
<rect x="960" y="208" width="6" height="6" fill="#000000" fill-opacity="0.01"/>
<rect x="952" y="214" width="2" height="6" fill="#8c8c8c"/>
<rect x="954" y="214" width="6" height="6" fill="#000000" fill-opacity="0.08"/>
<rect x="960" y="214" width="6" height="6" fill="#000000" fill-opacity="0.01"/>
<rect x="952" y="220" width="2" height="6" fill="#a0a0a0"/>
<rect x="954" y="220" width="6" height="6" fill="#000000" fill-opacity="0.10"/>
<rect x="960" y="220" width="6" height="6" fill="#000000" fill-opacity="0.02"/>
<rect x="952" y="226" width="2" height="6" fill="#1c1c1c"/>
<rect x="954" y="226" width="6" height="6" fill="#000000" fill-opacity="0.07"/>
<rect x="960" y="226" width="6" height="6" fill="#000000" fill-opacity="0.03"/>
<rect x="952" y="232" width="2" height="6" fill="#1c1c1c"/>
<rect x="954" y="232" width="6" height="6" fill="#000000" fill-opacity="0.11"/>
<rect x="960" y="232" width="6" height="6" fill="#000000" fill-opacity="0.00"/>
<rect x="952" y="238" width="2" height="6" fill="#1c1c1c"/>
<rect x="954" y="238" width="6" height="6" fill="#000000" fill-opacity="0.12"/>
<rect x="960" y="238" width="6" height="6" fill="#000000" fill-opacity="0.02"/>
<rect x="952" y="244" width="2" height="6" fill="#a0a0a0"/>
<rect x="954" y="244" width="6" height="6" fill="#000000" fill-opacity="0.11"/>
<rect x="960" y="244" width="6" height="6" fill="#000000" fill-opacity="0.03"/>
<rect x="952" y="250" width="2" height="6" fill="#1c1c1c"/>
<rect x="954" y="250" width="6" height="6" fill="#000000" fill-opacity="0.03"/>
<rect x="960" y="250" width="6" height="6" fill="#000000" fill-opacity="0.02"/>
<rect x="952" y="256" width="2" height="6" fill="#a0a0a0"/>
<rect x="954" y="256" width="6" height="6" fill="#000000" fill-opacity="0.10"/>
<rect x="960" y="256" width="6" height="6" fill="#000000" fill-opacity="0.04"/>
<rect x="952" y="262" width="2" height="6" fill="#a0a0a0"/>
<rect x="954" y="262" width="6" height="6" fill="#000000" fill-opacity="0.06"/>
<rect x="960" y="262" width="6" height="6" fill="#000000" fill-opacity="0.03"/>
<rect x="952" y="268" width="2" height="6" fill="#1c1c1c"/>
<rect x="954" y="268" width="6" height="6" fill="#000000" fill-opacity="0.06"/>
<rect x="960" y="268" width="6" height="6" fill="#000000" fill-opacity="0.02"/>
<rect x="952" y="274" width="2" height="6" fill="#1c1c1c"/>
<rect x="954" y="274" width="6" height="6" fill="#000000" fill-opacity="0.11"/>
<rect x="960" y="274" width="6" height="6" fill="#000000" fill-opacity="0.02"/>
<rect x="952" y="280" width="2" height="6" fill="#1c1c1c"/>
<rect x="954" y="280" width="6" height="6" fill="#000000" fill-opacity="0.04"/>
<rect x="960" y="280" width="6" height="6" fill="#000000" fill-opacity="0.03"/>
<rect x="952" y="4" width="2" height="6" fill="#2f86c4"/>
<rect x="954" y="4" width="6" height="6" fill="#1d4f7a" fill-opacity="0.13"/>
<rect x="952" y="10" width="2" height="6" fill="#2f86c4"/>
<rect x="954" y="10" width="6" height="6" fill="#1d4f7a" fill-opacity="0.15"/>
<rect x="952" y="16" width="2" height="6" fill="#2f86c4"/>
<rect x="954" y="16" width="6" height="6" fill="#1d4f7a" fill-opacity="0.13"/>
<rect x="952" y="22" width="2" height="6" fill="#2f86c4"/>
<rect x="954" y="22" width="6" height="6" fill="#1d4f7a" fill-opacity="0.19"/>
<rect x="952" y="28" width="2" height="6" fill="#2f86c4"/>
<rect x="954" y="28" width="6" height="6" fill="#1d4f7a" fill-opacity="0.11"/>
<rect x="952" y="34" width="2" height="6" fill="#1d4f7a"/>
<rect x="954" y="34" width="6" height="6" fill="#1d4f7a" fill-opacity="0.16"/>
<rect x="952" y="40" width="2" height="6" fill="#1d4f7a"/>
<rect x="954" y="40" width="6" height="6" fill="#1d4f7a" fill-opacity="0.21"/>
<rect x="1679" y="14" width="6" height="6" fill="#ffffff" fill-opacity="0.26"/>
<rect x="1685" y="14" width="6" height="6" fill="#ffffff" fill-opacity="0.55"/>
<rect x="1691" y="14" width="6" height="6" fill="#ffffff" fill-opacity="0.35"/>
<rect x="1697" y="14" width="6" height="6" fill="#ffffff" fill-opacity="0.15"/>
<rect x="1703" y="14" width="6" height="6" fill="#ffffff" fill-opacity="0.51"/>
<rect x="1715" y="14" width="6" height="6" fill="#ffffff" fill-opacity="0.17"/>
<rect x="1721" y="14" width="6" height="6" fill="#ffffff" fill-opacity="0.35"/>
<rect x="1727" y="14" width="6" height="6" fill="#ffffff" fill-opacity="0.45"/>
<rect x="1739" y="14" width="6" height="6" fill="#ffffff" fill-opacity="0.45"/>
<rect x="1745" y="14" width="6" height="6" fill="#ffffff" fill-opacity="0.11"/>
<rect x="1757" y="14" width="6" height="6" fill="#ffffff" fill-opacity="0.25"/>
<rect x="1769" y="14" width="6" height="6" fill="#ffffff" fill-opacity="0.49"/>
<rect x="1673" y="20" width="6" height="6" fill="#ffffff" fill-opacity="0.41"/>
<rect x="1679" y="20" width="6" height="6" fill="#ffffff" fill-opacity="0.50"/>
<rect x="1691" y="20" width="6" height="6" fill="#ffffff" fill-opacity="0.50"/>
<rect x="1709" y="20" width="6" height="6" fill="#ffffff" fill-opacity="0.18"/>
<rect x="1721" y="20" width="6" height="6" fill="#ffffff" fill-opacity="0.27"/>
<rect x="1727" y="20" width="6" height="6" fill="#ffffff" fill-opacity="0.44"/>
<rect x="1739" y="20" width="6" height="6" fill="#ffffff" fill-opacity="0.15"/>
<rect x="1751" y="20" width="6" height="6" fill="#ffffff" fill-opacity="0.35"/>
<rect x="1757" y="20" width="6" height="6" fill="#ffffff" fill-opacity="0.53"/>
<rect x="1763" y="20" width="6" height="6" fill="#ffffff" fill-opacity="0.17"/>
<rect x="1775" y="20" width="6" height="6" fill="#ffffff" fill-opacity="0.22"/>
<rect x="1673" y="26" width="6" height="6" fill="#ffffff" fill-opacity="0.30"/>
<rect x="1685" y="26" width="6" height="6" fill="#ffffff" fill-opacity="0.42"/>
<rect x="1703" y="26" width="6" height="6" fill="#ffffff" fill-opacity="0.16"/>
<rect x="1715" y="26" width="6" height="6" fill="#ffffff" fill-opacity="0.44"/>
<rect x="1721" y="26" width="6" height="6" fill="#ffffff" fill-opacity="0.19"/>
<rect x="1727" y="26" width="6" height="6" fill="#ffffff" fill-opacity="0.10"/>
<rect x="1733" y="26" width="6" height="6" fill="#ffffff" fill-opacity="0.50"/>
<rect x="1739" y="26" width="6" height="6" fill="#ffffff" fill-opacity="0.32"/>
<rect x="1745" y="26" width="6" height="6" fill="#ffffff" fill-opacity="0.19"/>
<rect x="1751" y="26" width="6" height="6" fill="#ffffff" fill-opacity="0.14"/>
<rect x="1757" y="26" width="6" height="6" fill="#ffffff" fill-opacity="0.11"/>
<rect x="1769" y="26" width="6" height="6" fill="#ffffff" fill-opacity="0.42"/>
<rect x="1775" y="26" width="6" height="6" fill="#ffffff" fill-opacity="0.21"/>
<rect x="1812" y="11" width="6" height="6" fill="#ffffff" fill-opacity="0.11"/>
<rect x="1818" y="11" width="6" height="6" fill="#ffffff" fill-opacity="0.11"/>
<rect x="1824" y="11" width="6" height="6" fill="#ffffff" fill-opacity="0.53"/>
<rect x="1830" y="11" width="6" height="6" fill="#ffffff" fill-opacity="0.34"/>
<rect x="1836" y="11" width="6" height="6" fill="#ffffff" fill-opacity="0.50"/>
<rect x="1812" y="17" width="6" height="6" fill="#ffffff" fill-opacity="0.53"/>
<rect x="1824" y="17" width="6" height="6" fill="#ffffff" fill-opacity="0.41"/>
<rect x="1812" y="23" width="6" height="6" fill="#ffffff" fill-opacity="0.57"/>
<rect x="1824" y="23" width="6" height="6" fill="#ffffff" fill-opacity="0.26"/>
<rect x="1830" y="23" width="6" height="6" fill="#ffffff" fill-opacity="0.26"/>
<rect x="1836" y="23" width="6" height="6" fill="#ffffff" fill-opacity="0.46"/>
<rect x="1818" y="29" width="6" height="6" fill="#ffffff" fill-opacity="0.11"/>
<rect x="1824" y="29" width="6" height="6" fill="#ffffff" fill-opacity="0.36"/>
<rect x="1836" y="29" width="6" height="6" fill="#ffffff" fill-opacity="0.28"/>
<rect x="1878" y="14" width="6" height="6" fill="#ffffff" fill-opacity="0.71"/>
<rect x="1890" y="14" width="6" height="6" fill="#ffffff" fill-opacity="0.94"/>
<rect x="1878" y="20" width="6" height="6" fill="#ffffff" fill-opacity="0.37"/>
<rect x="1884" y="20" width="6" height="6" fill="#ffffff" fill-opacity="0.81"/>
<rect x="1890" y="20" width="6" height="6" fill="#ffffff" fill-opacity="0.22"/>
<rect x="1878" y="26" width="6" height="6" fill="#ffffff" fill-opacity="0.69"/>
<rect x="1884" y="26" width="6" height="6" fill="#ffffff" fill-opacity="0.73"/>
<rect x="1890" y="26" width="6" height="6" fill="#ffffff" fill-opacity="0.47"/>
<rect x="1902" y="18" width="6" height="6" fill="#ffffff" fill-opacity="0.18"/>
<rect x="1908" y="18" width="6" height="6" fill="#ffffff" fill-opacity="0.27"/>
<rect x="1902" y="24" width="6" height="6" fill="#ffffff" fill-opacity="0.34"/>
<rect x="1810" y="62" width="6" height="6" fill="#50586a" fill-opacity="0.54"/>
<rect x="1816" y="62" width="6" height="6" fill="#50586a" fill-opacity="0.79"/>
<rect x="1810" y="68" width="6" height="6" fill="#50586a" fill-opacity="0.48"/>
<rect x="1816" y="68" width="6" height="6" fill="#50586a" fill-opacity="0.64"/>
<rect x="1822" y="68" width="6" height="6" fill="#50586a" fill-opacity="0.52"/>
<rect x="1864" y="58" width="6" height="6" fill="#8a8a96" fill-opacity="0.36"/>
<rect x="1870" y="58" width="6" height="6" fill="#8a8a96" fill-opacity="0.45"/>
<rect x="1876" y="58" width="6" height="6" fill="#8a8a96" fill-opacity="0.53"/>
<rect x="1882" y="58" width="6" height="6" fill="#8a8a96" fill-opacity="0.56"/>
<rect x="1894" y="58" width="6" height="6" fill="#8a8a96" fill-opacity="0.21"/>
<rect x="1900" y="58" width="6" height="6" fill="#8a8a96" fill-opacity="0.11"/>
<rect x="1846" y="64" width="6" height="6" fill="#8a8a96" fill-opacity="0.11"/>
<rect x="1864" y="64" width="6" height="6" fill="#8a8a96" fill-opacity="0.28"/>
<rect x="1870" y="64" width="6" height="6" fill="#8a8a96" fill-opacity="0.29"/>
<rect x="1882" y="64" width="6" height="6" fill="#8a8a96" fill-opacity="0.43"/>
<rect x="1894" y="64" width="6" height="6" fill="#8a8a96" fill-opacity="0.11"/>
<rect x="1900" y="64" width="6" height="6" fill="#8a8a96" fill-opacity="0.22"/>
<rect x="1846" y="70" width="6" height="6" fill="#8a8a96" fill-opacity="0.26"/>
<rect x="1852" y="70" width="6" height="6" fill="#8a8a96" fill-opacity="0.24"/>
<rect x="1864" y="70" width="6" height="6" fill="#8a8a96" fill-opacity="0.59"/>
<rect x="1870" y="70" width="6" height="6" fill="#8a8a96" fill-opacity="0.34"/>
<rect x="1882" y="70" width="6" height="6" fill="#8a8a96" fill-opacity="0.58"/>
<rect x="1888" y="70" width="6" height="6" fill="#8a8a96" fill-opacity="0.25"/>
<rect x="1894" y="70" width="6" height="6" fill="#8a8a96" fill-opacity="0.10"/>
<rect x="1902" y="86" width="18" height="200" fill="#f1f1f1"/>
<rect x="1904" y="90" width="16" height="52" fill="#c4c4c4"/>
<rect x="1908" y="274" width="8" height="6" fill="#a0a0a0"/>
</svg>
</div>

<!-- ================= devtools ================= -->
<div style="left:0;top:86px;width:8px;height:1px;background:#3c3c3c"></div>
<div id="dtabs"></div>
<div id="dtool"></div>
<div id="navsel"></div>
<div class="st" style="left:953px;top:376px;color:#c7c7c7">ts</div>
<svg style="left:965px;top:378px" width="14" height="14" viewBox="0 0 14 14"><path d="M4.600 1.300h4.800M5.500 1.300v4.200L2 11.300c-.3.700.1 1.300.8 1.300h8.400c.7 0 1.100-.6.800-1.300L8.500 5.500V1.300" fill="none" stroke="#c7c7c7" stroke-width="1.200" stroke-linejoin="round"/></svg>
<div class="st" style="left:1012px;top:376px;color:#d2d2d2">AdBlock</div>
<!-- error / warning counts -->
<div style="left:1763px;top:380px;width:12px;height:12px;border-radius:50%;background:#e46962"></div>
<svg style="left:1763px;top:380px" width="12" height="12" viewBox="0 0 12 12"><path d="M4 4l4 4M8 4l-4 4" stroke="#3c1a18" stroke-width="1.300"/></svg>
<div class="st" style="left:1779px;top:376px;color:#d2d2d2">1</div>
<svg style="left:1797px;top:380px" width="12" height="12" viewBox="0 0 12 12"><path d="M1 1.500h10v7.500H4l-3 2.500z" fill="#f29c4a"/><path d="M6 3v3.200M6 7.200v1.200" stroke="#4a2a0a" stroke-width="1.400"/></svg>
<div class="st" style="left:1811px;top:376px;color:#d2d2d2">2</div>
<div style="left:1829px;top:377px;width:1px;height:16px;background:#5a5a5a"></div>
<!-- gear -->
<svg style="left:1840px;top:377px" width="16" height="16" viewBox="0 0 16 16"><path d="M6.600 1.300h2.800l.4 1.800 1.300.700 1.700-.6 1.400 2.400-1.300 1.200v1.500l1.300 1.200-1.400 2.400-1.700-.6-1.300.7-.4 1.800H6.600l-.4-1.800-1.300-.7-1.700.6-1.400-2.400 1.300-1.200V6.800L1.800 5.600l1.400-2.400 1.700.6 1.300-.7z" fill="none" stroke="#d2d2d2" stroke-width="1.300" stroke-linejoin="round"/><circle cx="8" cy="8" r="2.100" fill="#d2d2d2"/></svg>
<div style="left:1875px;top:379px;width:3px;height:3px;border-radius:50%;background:#d2d2d2;box-shadow:0 5px 0 #d2d2d2,0 10px 0 #d2d2d2"></div>
<svg style="left:1896px;top:379px" width="12" height="12" viewBox="0 0 12 12"><path d="M1 1l10 10M11 1L1 11" stroke="#d2d2d2" stroke-width="1.400"/></svg>
<!-- sources toolbar icons -->
<svg style="left:1671px;top:404px" width="16" height="16" viewBox="0 0 16 16"><rect x="1.200" y="2.200" width="13.600" height="11.600" rx="1" fill="none" stroke="#c7c7c7" stroke-width="1.400"/><path d="M10.500 2.200v11.600" stroke="#c7c7c7" stroke-width="1.400"/><path d="M4.500 5.300L8 8l-3.500 2.700z" fill="#c7c7c7"/></svg>
<svg style="left:1704px;top:404px" width="16" height="16" viewBox="0 0 16 16"><rect x="2.700" y="2.700" width="3.600" height="10.600" fill="none" stroke="#c7c7c7" stroke-width="1.400"/><rect x="9.700" y="2.700" width="3.600" height="10.600" fill="none" stroke="#c7c7c7" stroke-width="1.400"/></svg>
<svg style="left:1732px;top:404px" width="16" height="16" viewBox="0 0 16 16"><path d="M2.500 9c.5-3.500 3-5 5.500-5 2 0 3.700 1 4.700 2.800" fill="none" stroke="#777" stroke-width="1.400"/><path d="M13.500 3v4.300H9.200" fill="none" stroke="#777" stroke-width="1.400"/><circle cx="8" cy="11.500" r="1.900" fill="#777"/></svg>
<svg style="left:1760px;top:404px" width="16" height="16" viewBox="0 0 16 16"><path d="M8 1v8M4.500 6L8 9.500 11.500 6" fill="none" stroke="#777" stroke-width="1.400"/><circle cx="8" cy="13" r="1.900" fill="#777"/></svg>
<svg style="left:1788px;top:404px" width="16" height="16" viewBox="0 0 16 16"><path d="M8 10V2M4.500 5.500L8 2l3.500 3.500" fill="none" stroke="#777" stroke-width="1.400"/><circle cx="8" cy="13" r="1.900" fill="#777"/></svg>
<svg style="left:1815px;top:404px" width="18" height="16" viewBox="0 0 18 16"><path d="M1 8h8.500M6.500 4.500L10 8l-3.500 3.500" fill="none" stroke="#777" stroke-width="1.400"/><circle cx="14.500" cy="8" r="1.900" fill="#777"/></svg>
<div style="left:1842px;top:404px;width:1px;height:16px;background:#5a5a5a"></div>
<svg style="left:1851px;top:403px" width="18" height="18" viewBox="0 0 18 18"><path d="M4.500 4.500h7.300l3.700 4.500-3.700 4.500H3V6" fill="none" stroke="#c7c7c7" stroke-width="1.400" stroke-linejoin="round"/><path d="M2.500 2l13 14" stroke="#c7c7c7" stroke-width="1.400"/></svg>

<div id="tree">
</div>
<div style="left:0;top:0;width:224px;height:1022px;overflow:hidden">
<div class="arr-d" style="left:43px;top:536px"></div>
<svg class="ti" style="left:54px;top:532px" width="16" height="12" viewBox="0 0 16 12"><path d="M.6 1.600a1 1 0 0 1 1-1h4.200l1.700 2.200h-6.900z" fill="#7cacf8"/><rect x=".75" y="2.600" width="14.500" height="8.600" rx="1.300" fill="none" stroke="#7cacf8" stroke-width="1.500"/></svg>
<div class="tt" style="left:76px;top:529px">resources</div>
<div class="arr-r" style="left:56px;top:554px"></div>
<svg class="ti" style="left:66px;top:552px" width="16" height="12" viewBox="0 0 16 12"><path d="M.6 1.600a1 1 0 0 1 1-1h4.200l1.700 2.200h-6.900z" fill="#7cacf8"/><rect x=".75" y="2.600" width="14.500" height="8.600" rx="1.300" fill="none" stroke="#7cacf8" stroke-width="1.500"/></svg>
<div class="tt" style="left:88px;top:549px">css</div>
<div class="arr-r" style="left:56px;top:574px"></div>
<svg class="ti" style="left:66px;top:572px" width="16" height="12" viewBox="0 0 16 12"><path d="M.6 1.600a1 1 0 0 1 1-1h4.200l1.700 2.200h-6.900z" fill="#7cacf8"/><rect x=".75" y="2.600" width="14.500" height="8.600" rx="1.300" fill="none" stroke="#7cacf8" stroke-width="1.500"/></svg>
<div class="tt" style="left:88px;top:569px">images</div>
<div class="arr-d" style="left:55px;top:596px"></div>
<svg class="ti" style="left:66px;top:592px" width="16" height="12" viewBox="0 0 16 12"><path d="M.6 1.600a1 1 0 0 1 1-1h4.200l1.700 2.200h-6.900z" fill="#7cacf8"/><rect x=".75" y="2.600" width="14.500" height="8.600" rx="1.300" fill="none" stroke="#7cacf8" stroke-width="1.500"/></svg>
<div class="tt" style="left:88px;top:589px">js</div>
<svg class="ti" style="left:80px;top:610px" width="12" height="15" viewBox="0 0 12 15"><path d="M1 2 a1.2 1.2 0 0 1 1.2-1.2 h5.3 l3.7 3.7 v8.3 a1.2 1.2 0 0 1-1.2 1.2 h-7.8 a1.2 1.2 0 0 1-1.2-1.2z" fill="none" stroke="#ee8953" stroke-width="1.5"/></svg>
<div class="tt" style="left:100px;top:609px">content-type.js</div>
<div class="tsel" style="top:628px"></div>
<svg class="ti" style="left:80px;top:630px" width="12" height="15" viewBox="0 0 12 15"><path d="M1 2 a1.2 1.2 0 0 1 1.2-1.2 h5.3 l3.7 3.7 v8.3 a1.2 1.2 0 0 1-1.2 1.2 h-7.8 a1.2 1.2 0 0 1-1.2-1.2z" fill="none" stroke="#ee8953" stroke-width="1.5"/></svg>
<div class="tt" style="left:100px;top:629px">frame-tool.js</div>
<svg class="ti" style="left:80px;top:650px" width="12" height="15" viewBox="0 0 12 15"><path d="M1 2 a1.2 1.2 0 0 1 1.2-1.2 h5.3 l3.7 3.7 v8.3 a1.2 1.2 0 0 1-1.2 1.2 h-7.8 a1.2 1.2 0 0 1-1.2-1.2z" fill="none" stroke="#ee8953" stroke-width="1.5"/></svg>
<div class="tt" style="left:100px;top:649px">language.js</div>
<svg class="ti" style="left:80px;top:670px" width="12" height="15" viewBox="0 0 12 15"><path d="M1 2 a1.2 1.2 0 0 1 1.2-1.2 h5.3 l3.7 3.7 v8.3 a1.2 1.2 0 0 1-1.2 1.2 h-7.8 a1.2 1.2 0 0 1-1.2-1.2z" fill="none" stroke="#ee8953" stroke-width="1.5"/></svg>
<div class="tt" style="left:100px;top:669px">main.js</div>
<svg class="ti" style="left:80px;top:690px" width="12" height="15" viewBox="0 0 12 15"><path d="M1 2 a1.2 1.2 0 0 1 1.2-1.2 h5.3 l3.7 3.7 v8.3 a1.2 1.2 0 0 1-1.2 1.2 h-7.8 a1.2 1.2 0 0 1-1.2-1.2z" fill="none" stroke="#ee8953" stroke-width="1.5"/></svg>
<div class="tt" style="left:100px;top:689px">syscode.js</div>
<svg class="ti" style="left:80px;top:710px" width="12" height="15" viewBox="0 0 12 15"><path d="M1 2 a1.2 1.2 0 0 1 1.2-1.2 h5.3 l3.7 3.7 v8.3 a1.2 1.2 0 0 1-1.2 1.2 h-7.8 a1.2 1.2 0 0 1-1.2-1.2z" fill="none" stroke="#ee8953" stroke-width="1.5"/></svg>
<div class="tt" style="left:100px;top:709px">syscode_init.js</div>
<div class="arr-r" style="left:56px;top:734px"></div>
<svg class="ti" style="left:66px;top:732px" width="16" height="12" viewBox="0 0 16 12"><path d="M.6 1.600a1 1 0 0 1 1-1h4.200l1.700 2.200h-6.900z" fill="#7cacf8"/><rect x=".75" y="2.600" width="14.500" height="8.600" rx="1.300" fill="none" stroke="#7cacf8" stroke-width="1.500"/></svg>
<div class="tt" style="left:88px;top:729px">plugins</div>
<div class="arr-r" style="left:32px;top:754px"></div>
<svg class="ti" style="left:42px;top:752px" width="16" height="12" viewBox="0 0 16 12"><path d="M.6 1.600a1 1 0 0 1 1-1h4.200l1.700 2.200h-6.900z" fill="#7cacf8"/><rect x=".75" y="2.600" width="14.500" height="8.600" rx="1.300" fill="none" stroke="#7cacf8" stroke-width="1.500"/></svg>
<div class="tt" style="left:64px;top:749px">pros_ahdx/login/basic/images</div>
<div class="arr-r" style="left:20px;top:774px"></div>
<svg class="ti" style="left:30px;top:772px" width="16" height="12" viewBox="0 0 16 12"><rect x=".75" y=".75" width="14.500" height="10.500" rx="1.300" fill="none" stroke="#c7c7c7" stroke-width="1.500"/><path d="M1 1.500h14" stroke="#c7c7c7" stroke-width="2"/></svg>
<div class="tt" style="left:52px;top:769px">iframe1 (mainPage/)</div>
</div>
<div id="treediv"></div>
<div id="hscroll"></div><div id="hthumb"></div>
<div style="left:5px;top:1027px;width:0;height:0;border-top:4.500px solid transparent;border-bottom:4.500px solid transparent;border-right:5px solid #7a7a7a"></div>
<div style="left:213px;top:1027px;width:0;height:0;border-top:4.500px solid transparent;border-bottom:4.500px solid transparent;border-left:5px solid #fff"></div>
<div id="gutter"></div><div id="gutdiv"></div>
<div id="code">
<div class="ig" style="left:308.4px;top:571.3px;height:14.4px"></div>
<div class="ig" style="left:308.4px;top:672.1px;height:14.4px"></div>
<div class="ig" style="left:308.4px;top:772.9px;height:14.4px"></div>
<div class="ig" style="left:308.4px;top:888.1px;height:129.6px"></div>
<div class="ig" style="left:334.8px;top:902.5px;height:115.2px"></div>
<div class="ig" style="left:361.2px;top:974.5px;height:43.2px"></div>
<div class="ig" style="left:387.6px;top:988.9px;height:14.4px"></div>
<div class="ln" style="top:528.1px">1669</div>
<div class="ln" style="top:542.5px">1670</div>
<div class="ln" style="top:556.9px">1671</div>
<div class="ln" style="top:571.3px">1672</div>
<div class="ln" style="top:585.7px">1673</div>
<div class="ln" style="top:600.1px">1674</div>
<div class="ln" style="top:614.5px">1675</div>
<div class="ln" style="top:628.9px">1676</div>
<div class="ln" style="top:643.3px">1677</div>
<div class="ln" style="top:657.7px">1678</div>
<div class="ln" style="top:672.1px">1679</div>
<div class="ln" style="top:686.5px">1680</div>
<div class="ln" style="top:700.9px">1681</div>
<div class="ln" style="top:715.3px">1682</div>
<div class="ln" style="top:729.7px">1683</div>
<div class="ln" style="top:744.1px">1684</div>
<div class="ln" style="top:758.5px">1685</div>
<div class="ln" style="top:772.9px">1686</div>
<div class="ln" style="top:787.3px">1687</div>
<div class="ln" style="top:801.7px">1688</div>
<div class="ln" style="top:816.1px">1689</div>
<div class="ln" style="top:830.5px">1690</div>
<div class="ln" style="top:844.9px">1691</div>
<div class="ln" style="top:859.3px">1692</div>
<div class="ln" style="top:873.7px">1693</div>
<div class="ln" style="top:888.1px">1694</div>
<div class="ln" style="top:902.5px">1695</div>
<div class="ln" style="top:916.9px">1696</div>
<div class="ln" style="top:931.3px">1697</div>
<div class="ln" style="top:945.7px">1698</div>
<div class="ln" style="top:960.1px">1699</div>
<div class="ln" style="top:974.5px">1700</div>
<div class="ln" style="top:988.9px">1701</div>
<div class="ln" style="top:1003.3px">1702</div>
<div class="cl" style="top:528.1px">    },</div>
<div class="cl" style="top:542.5px"></div>
<div class="cl" style="top:556.9px">    <span class="ty">openEntity</span>: <span class="tk">function</span> (<span class="td">el</span>, <span class="td">id</span>) {</div>
<div class="cl" style="top:571.3px">        tool.<span class="ty">editDataById</span>(el, id);</div>
<div class="cl" style="top:585.7px">    },</div>
<div class="cl" style="top:600.1px">    <span class="tc">/**</span></div>
<div class="cl" style="top:614.5px"><span class="tc">     * <span class="cj">重置</span></span></div>
<div class="cl" style="top:628.9px"><span class="tc">     * @param el form<span class="cj">中的一个对象</span> (this)</span></div>
<div class="cl" style="top:643.3px"><span class="tc">     */</span></div>
<div class="cl" style="top:657.7px">    <span class="ty">super_reset</span>: <span class="tk">function</span> (<span class="td">el</span>) {</div>
<div class="cl" style="top:672.1px">        tool.<span class="ty">resetForm</span>(el);</div>
<div class="cl" style="top:686.5px">    },</div>
<div class="cl" style="top:700.9px">    <span class="tc">/**</span></div>
<div class="cl" style="top:715.3px"><span class="tc">     * <span class="cj">下载文件</span></span></div>
<div class="cl" style="top:729.7px"><span class="tc">     * @param path</span></div>
<div class="cl" style="top:744.1px"><span class="tc">     */</span></div>
<div class="cl" style="top:758.5px">    <span class="ty">downloadfile</span>: <span class="tk">function</span> (<span class="td">path</span>) {</div>
<div class="cl" style="top:772.9px">        $(<span class="ts">'#iframedownload'</span>).<span class="ty">attr</span>(<span class="ts">'src'</span>, basePath + <span class="ts">'</span><span class="th">/filedownload.jsp?path=</span><span class="ts">'</span> + path.<span class="ty">replaceAll</span>(<span class="ts">'\\\\'</span>, <span class="ts">'\/'</span>));</div>
<div class="cl" style="top:787.3px">    },</div>
<div class="cl" style="top:801.7px">    <span class="tc">/**</span></div>
<div class="cl" style="top:816.1px"><span class="tc">     * <span class="cj">加密</span>url<span class="cj">，返回带加密串的新</span>url</span></div>
<div class="cl" style="top:830.5px"><span class="tc">     * @param url</span></div>
<div class="cl" style="top:844.9px"><span class="tc">     * @returns {*}</span></div>
<div class="cl" style="top:859.3px"><span class="tc">     */</span></div>
<div class="cl" style="top:873.7px">    <span class="ty">initParams</span>: <span class="tk">function</span> (<span class="td">url</span>) {</div>
<div class="cl" style="top:888.1px">        $.<span class="ty">ajax</span>({</div>
<div class="cl" style="top:902.5px">            <span class="ty">type</span>: <span class="ts">"post"</span>,</div>
<div class="cl" style="top:916.9px">            <span class="ty">url</span>: basePath + <span class="ts">'/s/geturl'</span>,</div>
<div class="cl" style="top:931.3px">            <span class="ty">data</span>: <span class="ts">"url="</span>  + url.<span class="ty">replaceAll</span>(<span class="ts">'&amp;'</span>,<span class="ts">'jdand'</span>) +  <span class="ts">"&amp;userloginid="</span> + tool.<span class="ty">userloginid</span>,</div>
<div class="cl" style="top:945.7px">            <span class="ty">async</span>: false,</div>
<div class="cl" style="top:960.1px">            <span class="ty">error</span>: <span class="tk">function</span> (<span class="td">XMLHttpRequest</span>, <span class="td">textStatus</span>, <span class="td">errorThrown</span>) {</div>
<div class="cl" style="top:974.5px">                <span class="tk">if</span> (textStatus == <span class="ts">"timeout"</span>) {</div>
<div class="cl" style="top:988.9px">                    tool.<span class="ty">alertWarning</span>(<span class="ts">'<span class="cj">请求超时</span>!'</span>, <span class="ts">'<span class="cj">请稍后重试</span>!'</span>);</div>
<div class="cl" style="top:1003.3px">                } <span class="tk">else</span> {</div>
</div>
<div id="status"></div>
<div class="st" style="left:233px;top:1017px;font-size:15px;color:#c7c7c7;letter-spacing:5px">{}</div>
<div class="st" style="left:260px;top:1018px;color:#c7c7c7;letter-spacing:-0.17px">23 characters selected</div>
<div class="st" style="left:1608px;top:1018px;color:#c7c7c7">Coverage: n/a</div>
<div id="vscroll"></div><div id="vthumb"></div>
<div style="left:1682.500px;top:433px;width:0;height:0;border-left:4px solid transparent;border-right:4px solid transparent;border-bottom:4px solid #fff"></div>
<div style="left:1682.500px;top:1002px;width:0;height:0;border-left:4px solid transparent;border-right:4px solid transparent;border-top:4px solid #fff"></div>
<div id="side"></div>
<div id="sidediv"></div>
<div class="sh" style="top:425px"></div>
<div class="arr-r s" style="left:1705px;top:432px"></div>
<div class="st" style="left:1717px;top:427px">Watch</div>
<div class="sh" style="top:447px"></div>
<div class="arr-d s" style="left:1704px;top:456px"></div>
<div class="st" style="left:1717px;top:449px">Breakpoints</div>
<div class="sline" style="top:468px"></div>
<div class="cb" style="left:1702px;top:475px"></div>
<div class="st" style="left:1720px;top:472px">Pause on uncaught exceptions</div>
<div class="cb" style="left:1702px;top:493px"></div>
<div class="st" style="left:1720px;top:490px">Pause on caught exceptions</div>
<div class="sh" style="top:511px"></div>
<div class="arr-d s" style="left:1704px;top:520px"></div>
<div class="st" style="left:1717px;top:513px">Scope</div>
<div class="sline" style="top:532px"></div>
<div class="np" style="top:538px">Not paused</div>
<div class="sh" style="top:561px"></div>
<div class="arr-d s" style="left:1704px;top:570px"></div>
<div class="st" style="left:1717px;top:563px">Call Stack</div>
<div class="sline" style="top:582px"></div>
<div class="np" style="top:588px">Not paused</div>
<div class="sh" style="top:611px"></div>
<div class="arr-r s" style="left:1705px;top:618px"></div>
<div class="st" style="left:1717px;top:613px">XHR/fetch Breakpoints</div>
<div class="sh" style="top:633px"></div>
<div class="arr-r s" style="left:1705px;top:640px"></div>
<div class="st" style="left:1717px;top:635px">DOM Breakpoints</div>
<div class="sh" style="top:655px"></div>
<div class="arr-r s" style="left:1705px;top:662px"></div>
<div class="st" style="left:1717px;top:657px">Global Listeners</div>
<div class="sh" style="top:677px"></div>
<div class="arr-r s" style="left:1705px;top:684px"></div>
<div class="st" style="left:1717px;top:679px">Event Listener Breakpoints</div>
<div class="sh" style="top:699px"></div>
<div class="arr-r s" style="left:1705px;top:706px"></div>
<div class="st" style="left:1717px;top:701px">CSP Violation Breakpoints</div>
<div id="sidetop"></div>

<!-- ================= dialog ================= -->
<div id="dlg">
<div id="dtitle"></div><div id="dtop"></div>
<!-- chrome logo -->
<svg style="left:8px;top:7px" width="16" height="16" viewBox="0 0 16 16">
<circle cx="8" cy="8" r="8" fill="#db4437"/>
<path d="M8 8L1.070 4A8 8 0 0 0 8 16z" fill="#0f9d58"/>
<path d="M8 8v8A8 8 0 0 0 14.930 4z" fill="#ffcd40"/>
<path d="M8 8L1.070 4A8 8 0 0 1 14.930 4z" fill="#db4437"/>
<circle cx="8" cy="8" r="3.700" fill="#fff"/><circle cx="8" cy="8" r="2.900" fill="#4285f4"/>
</svg>
<div class="dt" style="left:29px;top:5px">另存为</div>
<svg style="left:924px;top:10px" width="11" height="11" viewBox="0 0 11 11"><path d="M.5.5l10 10M10.500.5l-10 10" stroke="#fff" stroke-width="1.200"/></svg>
<div id="dnav"></div>
<!-- nav arrows -->
<svg style="left:12px;top:45px" width="14" height="14" viewBox="0 0 14 14"><path d="M13 7H2M7 2L2 7l5 5" fill="none" stroke="#8a8a8a" stroke-width="1.600"/></svg>
<svg style="left:42px;top:45px" width="14" height="14" viewBox="0 0 14 14"><path d="M1 7h11M7 2l5 5-5 5" fill="none" stroke="#8a8a8a" stroke-width="1.600"/></svg>
<svg style="left:68px;top:48px" width="8" height="6" viewBox="0 0 8 6"><path d="M1 1l3 3 3-3" fill="none" stroke="#7a7a7a" stroke-width="1.400"/></svg>
<svg style="left:86px;top:45px" width="14" height="14" viewBox="0 0 14 14"><path d="M7 13V2M2 7l5-5 5 5" fill="none" stroke="#fff" stroke-width="1.700"/></svg>
<!-- address box -->
<div class="box" style="left:106px;top:36px;width:612px;height:31px"></div>
<div style="left:109px;top:45px;width:16px;height:12px;background:linear-gradient(115deg,#1b9bf0 0 45%,#3aaaf5 45% 60%,#1b9bf0 60%);border-bottom:2px solid #0b76c8"></div><div style="left:110px;top:55px;width:11px;height:1px;background:#d8ecfa"></div><div style="left:123px;top:55px;width:1px;height:1px;background:#fff"></div>
<svg style="left:132px;top:47px" width="6" height="9" viewBox="0 0 6 9"><path d="M1 1l3.500 3.500L1 8" fill="none" stroke="#7c7c7c" stroke-width="1.800"/></svg>
<div class="dt" style="left:148px;top:40px">此电脑</div>
<svg style="left:193px;top:47px" width="6" height="9" viewBox="0 0 6 9"><path d="M1 1l3.500 3.500L1 8" fill="none" stroke="#7c7c7c" stroke-width="1.800"/></svg>
<div class="dt" style="left:209px;top:40px">桌面</div>
<svg style="left:661px;top:48px" width="11" height="8" viewBox="0 0 11 8"><path d="M1 1.500l4.500 4.500L10 1.500" fill="none" stroke="#9a9a9a" stroke-width="1.600"/></svg>
<div style="left:683px;top:37px;width:1px;height:29px;background:#2b2b2b"></div>
<svg style="left:694px;top:44px" width="14" height="14" viewBox="0 0 14 14"><path d="M9.500 2.600A5 5 0 1 1 4 3" fill="none" stroke="#9a9a9a" stroke-width="1.500"/><path d="M9 .5l1 2.600-2.800.6" fill="none" stroke="#9a9a9a" stroke-width="1.300"/></svg>
<!-- search -->
<div class="box" style="left:730px;top:36px;width:202px;height:31px"></div>
<div class="dt" style="left:740px;top:41px;color:#808080">搜索"桌面"</div>
<svg style="left:910px;top:45px" width="14" height="14" viewBox="0 0 14 14"><circle cx="8.800" cy="5" r="3.300" fill="none" stroke="#9a9a9a" stroke-width="1.500"/><path d="M6.400 7.500L1.500 12.500" stroke="#9a9a9a" stroke-width="1.700"/></svg>
<!-- toolbar -->
<div id="dtb"></div><div id="dtbl"></div>
<div class="dt" style="left:18px;top:79px">组织</div>
<div style="left:47px;top:87px;width:0;height:0;border-left:4px solid transparent;border-right:4px solid transparent;border-top:4px solid #c8c8c8"></div>
<div class="dt" style="left:86px;top:79px">新建文件夹</div>
<div style="left:851px;top:83px;width:15px;height:11px;border:1px solid #e6e6e6;background:linear-gradient(180deg,#3b7fc4 0 40%,#6ea34a 40% 70%,#d8e6ee 70%)"></div>
<div style="left:875px;top:87px;width:0;height:0;border-left:4px solid transparent;border-right:4px solid transparent;border-top:4px solid #c8c8c8"></div>
<div style="left:913px;top:81px;width:16px;height:16px;border-radius:50%;background:#0067c0;color:#fff;font-weight:bold;font-size:12px;line-height:16px;text-align:center">?</div>
<!-- sidebar -->
<div id="dside"></div><div id="dsidel"></div>
<div style="left:1px;top:283px;width:155px;height:22px;background:#333"></div>
<!-- quick access star -->
<svg style="left:24px;top:126px" width="18" height="16" viewBox="32 126 18 16"><g transform="rotate(14 41.500 133.500)"><path d="M41.500 126.800l1.900 4.500 4.800.4-3.700 3.100 1.200 4.700-4.200-2.600-4.200 2.600 1.200-4.700-3.700-3.100 4.800-.4z" fill="#2aa4f4"/></g><path d="M33.800 137.300l3.400-1.700M34.600 139.300l3.400-1.700M36.800 140.600l2.200-1.200" stroke="#2aa4f4" stroke-width=".9"/></svg>
<div class="dt" style="left:45px;top:123px">快速访问</div>
<div style="left:32px;top:152px;width:16px;height:12px;background:linear-gradient(115deg,#1b9bf0 0 45%,#3aaaf5 45% 60%,#1b9bf0 60%);border-bottom:2px solid #0b76c8"></div><div style="left:33px;top:162px;width:11px;height:1px;background:#d8ecfa"></div><div style="left:46px;top:162px;width:1px;height:1px;background:#fff"></div>
<div class="dt" style="left:53px;top:147px">桌面</div>
<svg style="left:32px;top:174px" width="16" height="17" viewBox="0 0 16 17"><path d="M5.400 0h5.200v8H16L8 16.500 0 8h5.400z" fill="#2f8fe8"/></svg>
<div class="dt" style="left:53px;top:171px;letter-spacing:.75px">Downloads</div>
<svg style="left:34px;top:198px" width="13" height="16" viewBox="0 0 13 16"><path d="M1 .5h7.500L12 4v11.500H1z" fill="#f4f4f4" stroke="#9a9a9a" stroke-width=".8"/><path d="M3 5h5M3 7.500h7M3 10h7M3 12.500h7" stroke="#3a86d8" stroke-width="1"/><path d="M3 10h3" stroke="#4aa04a" stroke-width="1"/></svg>
<div class="dt" style="left:53px;top:195px">文档</div>
<div style="left:32px;top:224px;width:16px;height:12px;border:1px solid #e6e6e6;background:linear-gradient(180deg,#8fc0ea 0 45%,#5d9a4a 45% 70%,#e8eef2 70%)"></div>
<div class="dt" style="left:53px;top:219px">图片</div>
<!-- pins -->
<svg style="left:142px;top:152px" width="13" height="13" viewBox="150 152 13 13"><path d="M156.900 153L161.200 156.200L159.200 158.600L156.900 162.100L151.800 157.300L155.800 155.600z" fill="#a0a8ae"/><path d="M154.400 159.600L150.900 163.100" stroke="#a0a8ae" stroke-width="1.200"/></svg>
<svg style="left:142px;top:176px" width="13" height="13" viewBox="150 152 13 13"><path d="M156.900 153L161.200 156.200L159.200 158.600L156.900 162.100L151.800 157.300L155.800 155.600z" fill="#a0a8ae"/><path d="M154.400 159.600L150.900 163.100" stroke="#a0a8ae" stroke-width="1.200"/></svg>
<svg style="left:142px;top:200px" width="13" height="13" viewBox="150 152 13 13"><path d="M156.900 153L161.200 156.200L159.200 158.600L156.900 162.100L151.800 157.300L155.800 155.600z" fill="#a0a8ae"/><path d="M154.400 159.600L150.900 163.100" stroke="#a0a8ae" stroke-width="1.200"/></svg>
<svg style="left:142px;top:224px" width="13" height="13" viewBox="150 152 13 13"><path d="M156.900 153L161.200 156.200L159.200 158.600L156.900 162.100L151.800 157.300L155.800 155.600z" fill="#a0a8ae"/><path d="M154.400 159.600L150.900 163.100" stroke="#a0a8ae" stroke-width="1.200"/></svg>
<!-- nut cloud -->
<svg style="left:23px;top:253px" width="18" height="17" viewBox="31 253 18 17"><defs><linearGradient id="ng" x1="0" y1="0" x2="1" y2="1"><stop offset="0" stop-color="#f6cf86"/><stop offset="1" stop-color="#dd9a3c"/></linearGradient></defs><ellipse cx="39.300" cy="262.300" rx="7.300" ry="6.300" transform="rotate(-28 39.300 262.300)" fill="url(#ng)"/><path d="M34.300 257.400C37.500 254.300 44 254.300 46.800 257.200C48.200 259.400 48.300 262.300 47.300 264.800C46 260.300 40.500 256.800 34.300 257.400z" fill="#a8601f"/><path d="M45.800 256.600L47.800 254.600" stroke="#8a4a14" stroke-width="1.300"/></svg>
<div class="dt" style="left:45px;top:251px">坚果云</div>
<!-- this pc -->
<svg style="left:23px;top:286px" width="18" height="17" viewBox="31 286 18 17"><defs><linearGradient id="pg" x1="0" y1="0" x2="1" y2="1"><stop offset="0" stop-color="#7fd0fb"/><stop offset=".5" stop-color="#48b4f6"/><stop offset="1" stop-color="#2aa0ee"/></linearGradient></defs><rect x="32" y="287.300" width="16.200" height="9.900" fill="url(#pg)"/><path d="M38 297.200h4.200l.6 1.500h-5.400z" fill="#b8c8d2"/><path d="M32.200 300.800c4-1.300 11.800-1.300 15.800 0" fill="none" stroke="#c6d4dc" stroke-width="1.300"/></svg>
<div class="dt" style="left:45px;top:283px">此电脑</div>
<!-- network -->
<svg style="left:23px;top:317px" width="18" height="18" viewBox="31 317 18 18"><defs><radialGradient id="gg2" cx=".35" cy=".3" r=".8"><stop offset="0" stop-color="#d8eefb"/><stop offset=".5" stop-color="#6ab4de"/><stop offset="1" stop-color="#3a86be"/></radialGradient></defs><circle cx="43" cy="324" r="5.600" fill="url(#gg2)"/><rect x="32" y="324.500" width="11.500" height="7" fill="#48b4f6" stroke="#8fd4fb" stroke-width=".6"/><path d="M36.500 331.500h2.500v1.500h-2.500z" fill="#b8c8d2"/><path d="M34.500 333.600h6.500" stroke="#c6d4dc" stroke-width="1"/></svg>
<div class="dt" style="left:45px;top:315px">网络</div>
<!-- file list -->
<div id="thumb" style="left:180px;top:116px;width:90px;height:90px;overflow:hidden;background:#0d3f8f">
<svg style="left:0;top:0" width="90" height="90" viewBox="0 0 90 90">
<defs>
<linearGradient id="tbg" x1="0" y1="0" x2="0" y2="1"><stop offset="0" stop-color="#2a6db5"/><stop offset=".45" stop-color="#1f5ea3"/><stop offset="1" stop-color="#0b2a58"/></linearGradient>
<filter id="tb" x="-5%" y="-5%" width="110%" height="110%"><feGaussianBlur stdDeviation=".9"/></filter>
</defs>
<rect width="90" height="90" fill="url(#tbg)"/>
<g filter="url(#tb)">
<rect x="0" y="0" width="14" height="30" fill="#1b5596"/>
<path d="M58 0h32v12L70 22 60 18z" fill="#3b7dbd"/>
<path d="M60 4c6-6 16-4 18 4l-4 14H62z" fill="#3f86c6"/>
<!-- left bg person + monitor -->
<ellipse cx="17" cy="13" rx="4" ry="4.500" fill="#18325a"/>
<path d="M10 30c1-10 12-12 14-4l2 14H10z" fill="#3f8fd0"/>
<path d="M14 23l12 1 3 17-13-1z" fill="#bfe6ff"/>
<path d="M2 22l6 1v10l-6-1z" fill="#9fd4fb"/>
<!-- right monitors -->
<path d="M78 14l12-5v40l-11-3z" fill="#d6f1ff"/>
<path d="M76 13l4-2 1 36-3 4z" fill="#0c2144"/>
<path d="M62 27l14-1-1 21-13-2z" fill="#d2efff"/>
<path d="M66 47h8l2 8H64z" fill="#0c2144"/>
<!-- desk / keyboard -->
<path d="M56 52l34 2v36H62z" fill="#0a1d3e"/>
<path d="M62 57l28-4v8l-22 4z" fill="#3f7fb5"/>
<path d="M78 66l12-3v6l-8 3z" fill="#5b9fd0"/>
<path d="M82 78l8-2v8l-6 2z" fill="#2d6aa6"/>
<!-- chair -->
<path d="M0 24c3 4 5 8 5 10 10-3 18 6 20 22l4 34H0z" fill="#081a38"/>
<!-- hoodie -->
<path d="M21 44c6-5 14-4 20 2l18 12 12 10 10 4 2 18H28l-6-22c-2-8-3-18-1-24z" fill="#2a66a6"/>
<path d="M24 42c8-3 15 2 22 9l-10 8c-6-4-10-10-12-17z" fill="#4d95cf"/>
<path d="M45 52l14 10-6 6-12-8z" fill="#5aa6dc"/>
<path d="M30 70c10-4 22-2 34 4l6 16H34z" fill="#245e9c"/>
<!-- collar -->
<path d="M45 50l11 1 1 5-9 1z" fill="#7fcbf0"/>
<!-- face + hand -->
<path d="M52 35c4-2 7 0 8 4l1.500 6-2.500 5-6 .5-2-7z" fill="#cda4ac"/>
<path d="M57 47c3-2 7-2 9 0l2 5-5 3-6-3z" fill="#c99ca2"/>
<path d="M62 53l6-2 8 16-8 4z" fill="#3a7cbc"/>
<!-- hair -->
<path d="M24 22c2-9 12-14 22-12 8-1 16 4 18 12l4 8-10 0-6 4-4 12-16 4c-6-6-10-16-8-28z" fill="#0b1a38"/>
<path d="M24 28c-2 8 0 16 4 22l6-4z" fill="#1a48b8"/>
<!-- headphones -->
<rect x="36" y="10" width="12" height="9" rx="2" fill="#1d2c48"/>
<rect x="38" y="17" width="9" height="11" fill="#3b8ae2"/>
<rect x="40.500" y="25" width="4" height="9" fill="#6fa3dc"/>
<circle cx="41.500" cy="38.500" r="7.300" fill="#14284a"/>
<circle cx="41.500" cy="38.500" r="6.300" fill="#3f8fe2"/>
</g>
<circle cx="13" cy="2.500" r=".8" fill="#e88a6a"/><circle cx="21" cy="6.500" r=".7" fill="#e88a6a"/><circle cx="27" cy="10" r=".6" fill="#e88a6a"/>
</svg>

</div>
<div class="dt" style="left:176px;top:208px;width:100px;text-align:center;letter-spacing:.55px">logo.jpg</div>
<!-- Tools folder -->
<svg style="left:292px;top:120px" width="80" height="92" viewBox="300 120 80 92">
<defs><linearGradient id="fg" x1="0" y1="0" x2="1" y2="0"><stop offset="0" stop-color="#f9dd83"/><stop offset="1" stop-color="#efc85c"/></linearGradient>
<linearGradient id="gg" x1="0" y1="0" x2="0" y2="1"><stop offset="0" stop-color="#f3cf4a"/><stop offset="1" stop-color="#d9a21c"/></linearGradient></defs>
<path d="M313.500 124h47.500a1 1 0 0 1 1 1v12h-48.500z" fill="#f0c95e"/>
<path d="M357 134.500l17 1.500v66.500l-17 -1.500z" fill="#f1f1f1" stroke="#9a9a9a" stroke-width=".5"/>
<path d="M318 127l44 8.500v67l-36-5z" fill="#fbfbfb"/>
<path d="M320 128l36.500 12v67l-30-8z" fill="#f7f7f7" stroke="#d6d6d6" stroke-width=".4"/>
<g fill="none" stroke="url(#gg)" stroke-width="3" stroke-linecap="round">
<path d="M331 137.500C337.500 135.500 340.500 141 339.500 148.500C339 154.500 336 157 331 157"/>
<path d="M343.800 161.500C343 152 345 145.500 347.800 145C351.500 147 354.500 160 355 176C355 190 348 197 340.500 196.500C335 196 331 192.500 330.500 188"/>
<path d="M343.800 161.500L347.500 169"/>
</g>
<path d="M313.300 124L330 135.500V205.500L313.300 196z" fill="url(#fg)"/>
</svg>
<div style="left:288px;top:191px;width:19px;height:19px;background:#ededed;border:1px solid #d2d2d2"></div>
<svg style="left:290px;top:193px" width="15" height="15" viewBox="0 0 15 15"><path d="M3.500 13.500C2 8.500 4.500 5.500 8 5.200V2.500l5 1.200-1.200 5L9.500 7.500C7 7.800 5 9.500 5.800 13.500z" fill="#2a5cb0"/></svg>
<div class="dt" style="left:287px;top:208px;width:100px;text-align:center;letter-spacing:.5px">Tools</div>
<!-- bottom panel -->
<div id="dbot"></div>
<div class="dt" style="left:63px;top:427px">文件名(<u>N</u>):</div>
<div style="left:125px;top:424px;width:814px;height:25px;border:1px solid #fff;background:#383838"></div>
<div style="left:129px;top:427px;width:45px;height:18px;background:#0078d7"></div>
<div class="dt" style="left:130px;top:426px;letter-spacing:.45px">passwd</div>
<svg style="left:925px;top:434px" width="10" height="6" viewBox="0 0 10 6"><path d="M.7.700L5 5l4.300-4.300" fill="none" stroke="#d0d0d0" stroke-width="1.100"/></svg>
<div class="dt" style="left:54px;top:454px">保存类型(<u>T</u>):</div>
<div style="left:125px;top:451px;width:814px;height:25px;border:1px solid #9a9a9a;background:#383838"></div>
<div class="dt" style="left:129px;top:453px">所有文件 (*.*)</div>
<svg style="left:925px;top:461px" width="10" height="6" viewBox="0 0 10 6"><path d="M.7.700L5 5l4.300-4.300" fill="none" stroke="#d0d0d0" stroke-width="1.100"/></svg>
<svg style="left:12px;top:506px" width="11" height="7" viewBox="0 0 11 7"><path d="M1 6l4.500-4.500L10 6" fill="none" stroke="#d0d0d0" stroke-width="1.500"/></svg>
<div class="dt" style="left:30px;top:500px">隐藏文件夹</div>
<div style="left:739px;top:494px;width:88px;height:26px;border:2px solid #fff;background:#333"></div>
<div class="dt" style="left:739px;top:496px;width:88px;text-align:center">保存(<u>S</u>)</div>
<div style="left:839px;top:494px;width:88px;height:26px;border:1px solid #e6e6e6;background:#333;box-shadow:inset 0 0 0 1px #777"></div>
<div class="dt" style="left:839px;top:496px;width:88px;text-align:center">取消</div>
<svg style="left:932px;top:522px" width="9" height="9" viewBox="0 0 9 9" shape-rendering="crispEdges"><path d="M6 0h2v2H6zM6 3h2v2H6zM6 6h2v2H6zM3 3h2v2H3zM3 6h2v2H3zM0 6h2v2H0z" fill="#c8c8c8"/></svg>

</div>
</body>
</html>
